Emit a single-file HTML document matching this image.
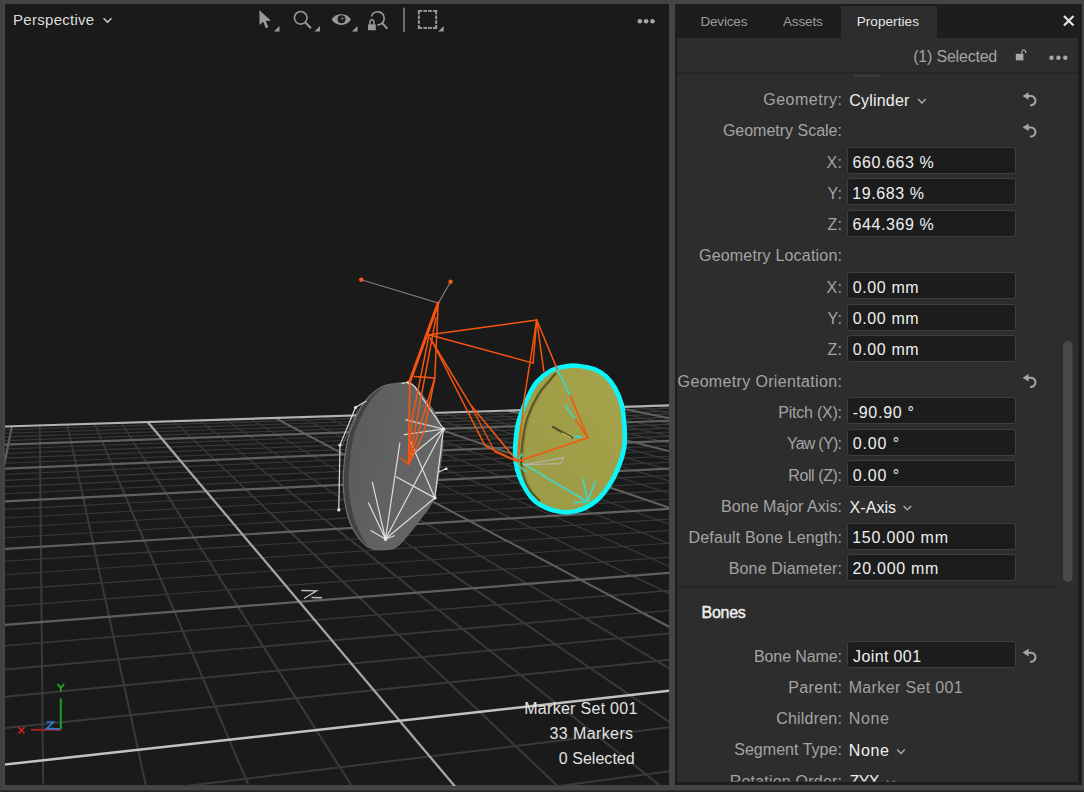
<!DOCTYPE html>
<html><head><meta charset="utf-8">
<style>
html,body{margin:0;padding:0}
body{width:1084px;height:792px;background:#454545;position:relative;overflow:hidden;font-family:"Liberation Sans",sans-serif}
.t{position:absolute;white-space:nowrap;line-height:20px;height:20px}
.abs{position:absolute}
#vp{position:absolute;left:4.8px;top:4px;width:664.2px;height:781.4px;background:#1a1a1a}
#pan{position:absolute;left:675px;top:4px;width:407px;height:781px;background:#1d1d1d}
#body{position:absolute;left:677px;top:38px;width:401px;height:744px;background:#2d2d2d}
#tabact{position:absolute;left:841px;top:6px;width:96px;height:33px;background:#2d2d2d}
.inp{position:absolute;left:846.8px;width:166.8px;height:25px;background:#1c1c1c;border:1px solid #3e3e3e;border-radius:3px}
svg{position:absolute;left:0;top:0}
.mn{stroke:#393939;stroke-width:2}
.mj{stroke:#606060;stroke-width:2.4}
.ax{stroke:#a6a6a6;stroke-width:2.3}
.ax0{stroke:#c2c2c2;stroke-width:2.5}
.ed{stroke:#b2b2b2;stroke-width:2.2}
</style></head><body>
<div class="abs" style="left:0;top:0;width:3px;height:792px;background:#414141"></div>
<div class="abs" style="left:0;top:790px;width:1084px;height:2px;background:linear-gradient(#353535,#232323)"></div>
<div id="vp"></div>
<div id="pan"></div>
<div id="tabact"></div>
<div id="body"></div>
<svg width="1084" height="792" viewBox="0 0 1084 792">
<defs><clipPath id="vpc"><rect x="5" y="4" width="664" height="782"/></clipPath><clipPath id="panc"><rect x="677" y="38" width="401" height="743.6"/></clipPath></defs>
<g clip-path="url(#vpc)" stroke-linecap="butt">
<g class="mn"><line x1="-20.7" y1="437.7" x2="-19.2" y2="434.0" stroke-width="1.65"/>
<line x1="-19.2" y1="434.0" x2="-17.8" y2="430.5" stroke-width="1.61"/>
<line x1="-17.8" y1="430.5" x2="-16.4" y2="427.2" stroke-width="1.57"/>
<line x1="43.8" y1="854.8" x2="43.3" y2="803.3" stroke-width="2.10"/>
<line x1="43.3" y1="803.3" x2="42.9" y2="760.4" stroke-width="2.10"/>
<line x1="42.9" y1="760.4" x2="42.5" y2="724.1" stroke-width="2.10"/>
<line x1="42.5" y1="724.1" x2="42.3" y2="693.1" stroke-width="2.10"/>
<line x1="42.3" y1="693.1" x2="42.0" y2="666.2" stroke-width="2.10"/>
<line x1="42.0" y1="666.2" x2="41.8" y2="642.7" stroke-width="2.10"/>
<line x1="41.8" y1="642.7" x2="41.6" y2="622.0" stroke-width="2.10"/>
<line x1="41.6" y1="622.0" x2="41.4" y2="603.6" stroke-width="2.10"/>
<line x1="41.4" y1="603.6" x2="41.3" y2="587.2" stroke-width="2.10"/>
<line x1="41.3" y1="587.2" x2="41.1" y2="572.4" stroke-width="2.10"/>
<line x1="41.1" y1="572.4" x2="41.0" y2="559.0" stroke-width="2.10"/>
<line x1="41.0" y1="559.0" x2="40.9" y2="546.8" stroke-width="2.10"/>
<line x1="40.9" y1="546.8" x2="40.8" y2="535.7" stroke-width="2.10"/>
<line x1="40.8" y1="535.7" x2="40.7" y2="525.5" stroke-width="2.10"/>
<line x1="40.7" y1="525.5" x2="40.6" y2="516.2" stroke-width="2.10"/>
<line x1="40.6" y1="516.2" x2="40.5" y2="507.5" stroke-width="2.10"/>
<line x1="40.5" y1="507.5" x2="40.4" y2="499.5" stroke-width="2.10"/>
<line x1="40.4" y1="499.5" x2="40.4" y2="492.1" stroke-width="2.10"/>
<line x1="40.4" y1="492.1" x2="40.3" y2="485.2" stroke-width="2.10"/>
<line x1="40.3" y1="485.2" x2="40.2" y2="478.8" stroke-width="2.10"/>
<line x1="40.2" y1="478.8" x2="40.2" y2="472.7" stroke-width="2.10"/>
<line x1="40.2" y1="472.7" x2="40.1" y2="467.1" stroke-width="2.10"/>
<line x1="40.1" y1="467.1" x2="40.1" y2="461.8" stroke-width="2.10"/>
<line x1="40.1" y1="461.8" x2="40.0" y2="456.8" stroke-width="2.07"/>
<line x1="40.0" y1="456.8" x2="40.0" y2="452.1" stroke-width="2.01"/>
<line x1="40.0" y1="452.1" x2="40.0" y2="447.6" stroke-width="1.95"/>
<line x1="40.0" y1="447.6" x2="39.9" y2="443.4" stroke-width="1.90"/>
<line x1="39.9" y1="443.4" x2="39.9" y2="439.4" stroke-width="1.85"/>
<line x1="39.9" y1="439.4" x2="39.8" y2="435.7" stroke-width="1.80"/>
<line x1="39.8" y1="435.7" x2="39.8" y2="432.1" stroke-width="1.76"/>
<line x1="39.8" y1="432.1" x2="39.8" y2="428.7" stroke-width="1.71"/>
<line x1="39.8" y1="428.7" x2="39.7" y2="425.4" stroke-width="1.67"/>
<line x1="157.7" y1="839.6" x2="147.0" y2="790.7" stroke-width="2.10"/>
<line x1="147.0" y1="790.7" x2="138.1" y2="749.8" stroke-width="2.10"/>
<line x1="138.1" y1="749.8" x2="130.6" y2="715.1" stroke-width="2.10"/>
<line x1="130.6" y1="715.1" x2="124.1" y2="685.3" stroke-width="2.10"/>
<line x1="124.1" y1="685.3" x2="118.4" y2="659.4" stroke-width="2.10"/>
<line x1="118.4" y1="659.4" x2="113.5" y2="636.8" stroke-width="2.10"/>
<line x1="113.5" y1="636.8" x2="109.1" y2="616.7" stroke-width="2.10"/>
<line x1="109.1" y1="616.7" x2="105.2" y2="598.9" stroke-width="2.10"/>
<line x1="105.2" y1="598.9" x2="101.8" y2="582.9" stroke-width="2.10"/>
<line x1="101.8" y1="582.9" x2="98.6" y2="568.5" stroke-width="2.10"/>
<line x1="98.6" y1="568.5" x2="95.8" y2="555.5" stroke-width="2.10"/>
<line x1="95.8" y1="555.5" x2="93.2" y2="543.6" stroke-width="2.10"/>
<line x1="93.2" y1="543.6" x2="90.8" y2="532.8" stroke-width="2.10"/>
<line x1="90.8" y1="532.8" x2="88.7" y2="522.9" stroke-width="2.10"/>
<line x1="88.7" y1="522.9" x2="86.7" y2="513.7" stroke-width="2.10"/>
<line x1="86.7" y1="513.7" x2="84.8" y2="505.3" stroke-width="2.10"/>
<line x1="84.8" y1="505.3" x2="83.1" y2="497.4" stroke-width="2.10"/>
<line x1="83.1" y1="497.4" x2="81.6" y2="490.2" stroke-width="2.10"/>
<line x1="81.6" y1="490.2" x2="80.1" y2="483.4" stroke-width="2.10"/>
<line x1="80.1" y1="483.4" x2="78.7" y2="477.1" stroke-width="2.10"/>
<line x1="78.7" y1="477.1" x2="77.4" y2="471.1" stroke-width="2.10"/>
<line x1="77.4" y1="471.1" x2="76.2" y2="465.6" stroke-width="2.10"/>
<line x1="76.2" y1="465.6" x2="75.1" y2="460.4" stroke-width="2.07"/>
<line x1="75.1" y1="460.4" x2="74.0" y2="455.5" stroke-width="2.01"/>
<line x1="74.0" y1="455.5" x2="73.0" y2="450.8" stroke-width="1.95"/>
<line x1="73.0" y1="450.8" x2="72.0" y2="446.4" stroke-width="1.89"/>
<line x1="72.0" y1="446.4" x2="71.1" y2="442.3" stroke-width="1.84"/>
<line x1="71.1" y1="442.3" x2="70.3" y2="438.4" stroke-width="1.79"/>
<line x1="70.3" y1="438.4" x2="69.5" y2="434.7" stroke-width="1.75"/>
<line x1="69.5" y1="434.7" x2="68.7" y2="431.1" stroke-width="1.70"/>
<line x1="68.7" y1="431.1" x2="68.0" y2="427.8" stroke-width="1.66"/>
<line x1="68.0" y1="427.8" x2="67.3" y2="424.5" stroke-width="1.62"/>
<line x1="265.6" y1="825.2" x2="245.8" y2="778.7" stroke-width="2.10"/>
<line x1="245.8" y1="778.7" x2="229.1" y2="739.7" stroke-width="2.10"/>
<line x1="229.1" y1="739.7" x2="215.0" y2="706.4" stroke-width="2.10"/>
<line x1="215.0" y1="706.4" x2="202.8" y2="677.8" stroke-width="2.10"/>
<line x1="202.8" y1="677.8" x2="192.1" y2="652.9" stroke-width="2.10"/>
<line x1="192.1" y1="652.9" x2="182.8" y2="631.0" stroke-width="2.10"/>
<line x1="182.8" y1="631.0" x2="174.5" y2="611.6" stroke-width="2.10"/>
<line x1="174.5" y1="611.6" x2="167.2" y2="594.3" stroke-width="2.10"/>
<line x1="167.2" y1="594.3" x2="160.6" y2="578.8" stroke-width="2.10"/>
<line x1="160.6" y1="578.8" x2="154.6" y2="564.8" stroke-width="2.10"/>
<line x1="154.6" y1="564.8" x2="149.2" y2="552.1" stroke-width="2.10"/>
<line x1="149.2" y1="552.1" x2="144.2" y2="540.5" stroke-width="2.10"/>
<line x1="144.2" y1="540.5" x2="139.7" y2="530.0" stroke-width="2.10"/>
<line x1="139.7" y1="530.0" x2="135.6" y2="520.3" stroke-width="2.10"/>
<line x1="135.6" y1="520.3" x2="131.8" y2="511.3" stroke-width="2.10"/>
<line x1="131.8" y1="511.3" x2="128.3" y2="503.0" stroke-width="2.10"/>
<line x1="128.3" y1="503.0" x2="125.0" y2="495.4" stroke-width="2.10"/>
<line x1="125.0" y1="495.4" x2="122.0" y2="488.2" stroke-width="2.10"/>
<line x1="122.0" y1="488.2" x2="119.1" y2="481.6" stroke-width="2.10"/>
<line x1="119.1" y1="481.6" x2="116.5" y2="475.4" stroke-width="2.10"/>
<line x1="116.5" y1="475.4" x2="114.0" y2="469.6" stroke-width="2.05"/>
<line x1="114.0" y1="469.6" x2="111.7" y2="464.1" stroke-width="1.99"/>
<line x1="111.7" y1="464.1" x2="109.5" y2="459.0" stroke-width="1.93"/>
<line x1="109.5" y1="459.0" x2="107.4" y2="454.1" stroke-width="1.87"/>
<line x1="107.4" y1="454.1" x2="105.5" y2="449.6" stroke-width="1.82"/>
<line x1="105.5" y1="449.6" x2="103.6" y2="445.3" stroke-width="1.77"/>
<line x1="103.6" y1="445.3" x2="101.9" y2="441.2" stroke-width="1.72"/>
<line x1="101.9" y1="441.2" x2="100.3" y2="437.3" stroke-width="1.68"/>
<line x1="100.3" y1="437.3" x2="98.7" y2="433.7" stroke-width="1.63"/>
<line x1="98.7" y1="433.7" x2="97.2" y2="430.2" stroke-width="1.59"/>
<line x1="97.2" y1="430.2" x2="95.8" y2="426.8" stroke-width="1.55"/>
<line x1="95.8" y1="426.8" x2="94.4" y2="423.7" stroke-width="1.52"/>
<line x1="401.8" y1="864.9" x2="368.0" y2="811.5" stroke-width="2.10"/>
<line x1="368.0" y1="811.5" x2="339.9" y2="767.3" stroke-width="2.10"/>
<line x1="339.9" y1="767.3" x2="316.2" y2="730.0" stroke-width="2.10"/>
<line x1="316.2" y1="730.0" x2="296.0" y2="698.1" stroke-width="2.10"/>
<line x1="296.0" y1="698.1" x2="278.5" y2="670.6" stroke-width="2.10"/>
<line x1="278.5" y1="670.6" x2="263.3" y2="646.6" stroke-width="2.10"/>
<line x1="263.3" y1="646.6" x2="249.8" y2="625.4" stroke-width="2.10"/>
<line x1="249.8" y1="625.4" x2="237.9" y2="606.6" stroke-width="2.10"/>
<line x1="237.9" y1="606.6" x2="227.3" y2="589.9" stroke-width="2.10"/>
<line x1="227.3" y1="589.9" x2="217.7" y2="574.8" stroke-width="2.10"/>
<line x1="217.7" y1="574.8" x2="209.1" y2="561.2" stroke-width="2.10"/>
<line x1="209.1" y1="561.2" x2="201.2" y2="548.8" stroke-width="2.10"/>
<line x1="201.2" y1="548.8" x2="194.1" y2="537.5" stroke-width="2.10"/>
<line x1="194.1" y1="537.5" x2="187.5" y2="527.2" stroke-width="2.10"/>
<line x1="187.5" y1="527.2" x2="181.5" y2="517.7" stroke-width="2.10"/>
<line x1="181.5" y1="517.7" x2="175.9" y2="509.0" stroke-width="2.10"/>
<line x1="175.9" y1="509.0" x2="170.8" y2="500.9" stroke-width="2.10"/>
<line x1="170.8" y1="500.9" x2="166.0" y2="493.3" stroke-width="2.10"/>
<line x1="166.0" y1="493.3" x2="161.6" y2="486.4" stroke-width="2.06"/>
<line x1="161.6" y1="486.4" x2="157.4" y2="479.8" stroke-width="1.99"/>
<line x1="157.4" y1="479.8" x2="153.6" y2="473.7" stroke-width="1.93"/>
<line x1="153.6" y1="473.7" x2="149.9" y2="468.0" stroke-width="1.87"/>
<line x1="149.9" y1="468.0" x2="146.5" y2="462.7" stroke-width="1.81"/>
<line x1="146.5" y1="462.7" x2="143.3" y2="457.6" stroke-width="1.76"/>
<line x1="143.3" y1="457.6" x2="140.3" y2="452.9" stroke-width="1.71"/>
<line x1="140.3" y1="452.9" x2="137.5" y2="448.4" stroke-width="1.66"/>
<line x1="137.5" y1="448.4" x2="134.8" y2="444.1" stroke-width="1.61"/>
<line x1="134.8" y1="444.1" x2="132.2" y2="440.1" stroke-width="1.57"/>
<line x1="132.2" y1="440.1" x2="129.8" y2="436.3" stroke-width="1.53"/>
<line x1="129.8" y1="436.3" x2="127.5" y2="432.7" stroke-width="1.49"/>
<line x1="127.5" y1="432.7" x2="125.3" y2="429.2" stroke-width="1.45"/>
<line x1="125.3" y1="429.2" x2="123.2" y2="426.0" stroke-width="1.42"/>
<line x1="123.2" y1="426.0" x2="121.3" y2="422.8" stroke-width="1.38"/>
<line x1="608.3" y1="834.2" x2="557.8" y2="786.2" stroke-width="2.10"/>
<line x1="557.8" y1="786.2" x2="515.5" y2="746.0" stroke-width="2.10"/>
<line x1="515.5" y1="746.0" x2="479.6" y2="711.8" stroke-width="2.10"/>
<line x1="479.6" y1="711.8" x2="448.7" y2="682.5" stroke-width="2.10"/>
<line x1="448.7" y1="682.5" x2="421.9" y2="657.0" stroke-width="2.10"/>
<line x1="421.9" y1="657.0" x2="398.3" y2="634.6" stroke-width="2.10"/>
<line x1="398.3" y1="634.6" x2="377.5" y2="614.8" stroke-width="2.10"/>
<line x1="377.5" y1="614.8" x2="359.0" y2="597.1" stroke-width="2.10"/>
<line x1="359.0" y1="597.1" x2="342.3" y2="581.3" stroke-width="2.10"/>
<line x1="342.3" y1="581.3" x2="327.4" y2="567.1" stroke-width="2.10"/>
<line x1="327.4" y1="567.1" x2="313.8" y2="554.2" stroke-width="2.10"/>
<line x1="313.8" y1="554.2" x2="301.4" y2="542.5" stroke-width="2.10"/>
<line x1="301.4" y1="542.5" x2="290.1" y2="531.7" stroke-width="2.08"/>
<line x1="290.1" y1="531.7" x2="279.8" y2="521.9" stroke-width="2.00"/>
<line x1="279.8" y1="521.9" x2="270.2" y2="512.8" stroke-width="1.92"/>
<line x1="270.2" y1="512.8" x2="261.4" y2="504.4" stroke-width="1.84"/>
<line x1="261.4" y1="504.4" x2="253.2" y2="496.6" stroke-width="1.78"/>
<line x1="253.2" y1="496.6" x2="245.7" y2="489.4" stroke-width="1.71"/>
<line x1="245.7" y1="489.4" x2="238.6" y2="482.7" stroke-width="1.65"/>
<line x1="238.6" y1="482.7" x2="232.0" y2="476.4" stroke-width="1.60"/>
<line x1="232.0" y1="476.4" x2="225.8" y2="470.5" stroke-width="1.55"/>
<line x1="225.8" y1="470.5" x2="220.0" y2="465.0" stroke-width="1.50"/>
<line x1="220.0" y1="465.0" x2="214.5" y2="459.8" stroke-width="1.45"/>
<line x1="214.5" y1="459.8" x2="209.4" y2="454.9" stroke-width="1.41"/>
<line x1="209.4" y1="454.9" x2="204.6" y2="450.3" stroke-width="1.37"/>
<line x1="204.6" y1="450.3" x2="200.0" y2="446.0" stroke-width="1.33"/>
<line x1="200.0" y1="446.0" x2="195.6" y2="441.9" stroke-width="1.30"/>
<line x1="195.6" y1="441.9" x2="191.5" y2="438.0" stroke-width="1.26"/>
<line x1="191.5" y1="438.0" x2="187.6" y2="434.3" stroke-width="1.23"/>
<line x1="187.6" y1="434.3" x2="183.9" y2="430.7" stroke-width="1.20"/>
<line x1="183.9" y1="430.7" x2="180.4" y2="427.4" stroke-width="1.20"/>
<line x1="180.4" y1="427.4" x2="177.1" y2="424.2" stroke-width="1.20"/>
<line x1="177.1" y1="424.2" x2="173.9" y2="421.2" stroke-width="1.20"/>
<line x1="703.5" y1="820.1" x2="645.9" y2="774.4" stroke-width="2.10"/>
<line x1="645.9" y1="774.4" x2="597.5" y2="736.0" stroke-width="2.10"/>
<line x1="597.5" y1="736.0" x2="556.3" y2="703.3" stroke-width="2.10"/>
<line x1="556.3" y1="703.3" x2="520.7" y2="675.1" stroke-width="2.10"/>
<line x1="520.7" y1="675.1" x2="489.7" y2="650.5" stroke-width="2.10"/>
<line x1="489.7" y1="650.5" x2="462.5" y2="628.9" stroke-width="2.10"/>
<line x1="462.5" y1="628.9" x2="438.3" y2="609.7" stroke-width="2.10"/>
<line x1="438.3" y1="609.7" x2="416.8" y2="592.6" stroke-width="2.10"/>
<line x1="416.8" y1="592.6" x2="397.5" y2="577.3" stroke-width="2.10"/>
<line x1="397.5" y1="577.3" x2="380.0" y2="563.4" stroke-width="2.10"/>
<line x1="380.0" y1="563.4" x2="364.2" y2="550.8" stroke-width="2.03"/>
<line x1="364.2" y1="550.8" x2="349.7" y2="539.4" stroke-width="1.94"/>
<line x1="349.7" y1="539.4" x2="336.5" y2="528.9" stroke-width="1.86"/>
<line x1="336.5" y1="528.9" x2="324.4" y2="519.3" stroke-width="1.78"/>
<line x1="324.4" y1="519.3" x2="313.2" y2="510.4" stroke-width="1.71"/>
<line x1="313.2" y1="510.4" x2="302.8" y2="502.2" stroke-width="1.65"/>
<line x1="302.8" y1="502.2" x2="293.2" y2="494.6" stroke-width="1.59"/>
<line x1="293.2" y1="494.6" x2="284.3" y2="487.5" stroke-width="1.53"/>
<line x1="284.3" y1="487.5" x2="276.0" y2="480.9" stroke-width="1.48"/>
<line x1="276.0" y1="480.9" x2="268.2" y2="474.7" stroke-width="1.43"/>
<line x1="268.2" y1="474.7" x2="261.0" y2="469.0" stroke-width="1.38"/>
<line x1="261.0" y1="469.0" x2="254.1" y2="463.5" stroke-width="1.34"/>
<line x1="254.1" y1="463.5" x2="247.7" y2="458.4" stroke-width="1.30"/>
<line x1="247.7" y1="458.4" x2="241.6" y2="453.6" stroke-width="1.26"/>
<line x1="241.6" y1="453.6" x2="235.9" y2="449.1" stroke-width="1.23"/>
<line x1="235.9" y1="449.1" x2="230.5" y2="444.8" stroke-width="1.20"/>
<line x1="230.5" y1="444.8" x2="225.4" y2="440.8" stroke-width="1.20"/>
<line x1="225.4" y1="440.8" x2="220.6" y2="436.9" stroke-width="1.20"/>
<line x1="220.6" y1="436.9" x2="216.0" y2="433.3" stroke-width="1.20"/>
<line x1="216.0" y1="433.3" x2="211.6" y2="429.8" stroke-width="1.20"/>
<line x1="211.6" y1="429.8" x2="207.4" y2="426.5" stroke-width="1.20"/>
<line x1="207.4" y1="426.5" x2="203.5" y2="423.3" stroke-width="1.20"/>
<line x1="203.5" y1="423.3" x2="199.7" y2="420.3" stroke-width="1.20"/>
<line x1="730.0" y1="763.2" x2="676.1" y2="726.5" stroke-width="2.10"/>
<line x1="676.1" y1="726.5" x2="630.0" y2="695.1" stroke-width="2.10"/>
<line x1="630.0" y1="695.1" x2="590.1" y2="668.0" stroke-width="2.10"/>
<line x1="590.1" y1="668.0" x2="555.3" y2="644.3" stroke-width="2.10"/>
<line x1="555.3" y1="644.3" x2="524.6" y2="623.4" stroke-width="2.10"/>
<line x1="524.6" y1="623.4" x2="497.3" y2="604.8" stroke-width="2.10"/>
<line x1="497.3" y1="604.8" x2="472.9" y2="588.2" stroke-width="2.10"/>
<line x1="472.9" y1="588.2" x2="451.0" y2="573.3" stroke-width="2.00"/>
<line x1="451.0" y1="573.3" x2="431.2" y2="559.8" stroke-width="1.90"/>
<line x1="431.2" y1="559.8" x2="413.2" y2="547.6" stroke-width="1.82"/>
<line x1="413.2" y1="547.6" x2="396.8" y2="536.4" stroke-width="1.74"/>
<line x1="396.8" y1="536.4" x2="381.8" y2="526.2" stroke-width="1.66"/>
<line x1="381.8" y1="526.2" x2="368.0" y2="516.8" stroke-width="1.59"/>
<line x1="368.0" y1="516.8" x2="355.2" y2="508.1" stroke-width="1.53"/>
<line x1="355.2" y1="508.1" x2="343.4" y2="500.0" stroke-width="1.47"/>
<line x1="343.4" y1="500.0" x2="332.5" y2="492.6" stroke-width="1.42"/>
<line x1="332.5" y1="492.6" x2="322.3" y2="485.6" stroke-width="1.37"/>
<line x1="322.3" y1="485.6" x2="312.8" y2="479.2" stroke-width="1.32"/>
<line x1="312.8" y1="479.2" x2="303.9" y2="473.1" stroke-width="1.28"/>
<line x1="303.9" y1="473.1" x2="295.5" y2="467.4" stroke-width="1.24"/>
<line x1="295.5" y1="467.4" x2="287.7" y2="462.1" stroke-width="1.20"/>
<line x1="287.7" y1="462.1" x2="280.3" y2="457.1" stroke-width="1.20"/>
<line x1="280.3" y1="457.1" x2="273.4" y2="452.4" stroke-width="1.20"/>
<line x1="273.4" y1="452.4" x2="266.8" y2="447.9" stroke-width="1.20"/>
<line x1="266.8" y1="447.9" x2="260.6" y2="443.7" stroke-width="1.20"/>
<line x1="260.6" y1="443.7" x2="254.8" y2="439.7" stroke-width="1.20"/>
<line x1="254.8" y1="439.7" x2="249.2" y2="435.9" stroke-width="1.20"/>
<line x1="249.2" y1="435.9" x2="243.9" y2="432.3" stroke-width="1.20"/>
<line x1="243.9" y1="432.3" x2="238.9" y2="428.9" stroke-width="1.20"/>
<line x1="238.9" y1="428.9" x2="234.1" y2="425.6" stroke-width="1.20"/>
<line x1="234.1" y1="425.6" x2="229.5" y2="422.5" stroke-width="1.20"/>
<line x1="229.5" y1="422.5" x2="225.2" y2="419.5" stroke-width="1.20"/>
<line x1="700.8" y1="687.3" x2="656.9" y2="661.1" stroke-width="2.10"/>
<line x1="656.9" y1="661.1" x2="618.5" y2="638.2" stroke-width="2.10"/>
<line x1="618.5" y1="638.2" x2="584.6" y2="618.0" stroke-width="2.10"/>
<line x1="584.6" y1="618.0" x2="554.5" y2="600.0" stroke-width="2.00"/>
<line x1="554.5" y1="600.0" x2="527.5" y2="583.9" stroke-width="1.89"/>
<line x1="527.5" y1="583.9" x2="503.2" y2="569.4" stroke-width="1.80"/>
<line x1="503.2" y1="569.4" x2="481.1" y2="556.3" stroke-width="1.71"/>
<line x1="481.1" y1="556.3" x2="461.1" y2="544.4" stroke-width="1.63"/>
<line x1="461.1" y1="544.4" x2="442.8" y2="533.5" stroke-width="1.56"/>
<line x1="442.8" y1="533.5" x2="426.1" y2="523.5" stroke-width="1.49"/>
<line x1="426.1" y1="523.5" x2="410.6" y2="514.3" stroke-width="1.43"/>
<line x1="410.6" y1="514.3" x2="396.4" y2="505.8" stroke-width="1.38"/>
<line x1="396.4" y1="505.8" x2="383.2" y2="497.9" stroke-width="1.33"/>
<line x1="383.2" y1="497.9" x2="370.9" y2="490.6" stroke-width="1.28"/>
<line x1="370.9" y1="490.6" x2="359.5" y2="483.8" stroke-width="1.24"/>
<line x1="359.5" y1="483.8" x2="348.8" y2="477.4" stroke-width="1.20"/>
<line x1="348.8" y1="477.4" x2="338.8" y2="471.5" stroke-width="1.20"/>
<line x1="338.8" y1="471.5" x2="329.5" y2="465.9" stroke-width="1.20"/>
<line x1="329.5" y1="465.9" x2="320.7" y2="460.7" stroke-width="1.20"/>
<line x1="320.7" y1="460.7" x2="312.4" y2="455.8" stroke-width="1.20"/>
<line x1="312.4" y1="455.8" x2="304.6" y2="451.1" stroke-width="1.20"/>
<line x1="304.6" y1="451.1" x2="297.3" y2="446.7" stroke-width="1.20"/>
<line x1="297.3" y1="446.7" x2="290.3" y2="442.6" stroke-width="1.20"/>
<line x1="290.3" y1="442.6" x2="283.7" y2="438.6" stroke-width="1.20"/>
<line x1="283.7" y1="438.6" x2="277.4" y2="434.9" stroke-width="1.20"/>
<line x1="277.4" y1="434.9" x2="271.4" y2="431.3" stroke-width="1.20"/>
<line x1="271.4" y1="431.3" x2="265.8" y2="427.9" stroke-width="1.20"/>
<line x1="265.8" y1="427.9" x2="260.4" y2="424.7" stroke-width="1.20"/>
<line x1="260.4" y1="424.7" x2="255.2" y2="421.7" stroke-width="1.20"/>
<line x1="255.2" y1="421.7" x2="250.3" y2="418.7" stroke-width="1.20"/>
<line x1="738.8" y1="626.8" x2="699.2" y2="607.8" stroke-width="1.72"/>
<line x1="699.2" y1="607.8" x2="663.8" y2="590.9" stroke-width="1.63"/>
<line x1="663.8" y1="590.9" x2="632.0" y2="575.8" stroke-width="1.55"/>
<line x1="632.0" y1="575.8" x2="603.2" y2="562.0" stroke-width="1.47"/>
<line x1="603.2" y1="562.0" x2="577.2" y2="549.6" stroke-width="1.40"/>
<line x1="577.2" y1="549.6" x2="553.4" y2="538.2" stroke-width="1.34"/>
<line x1="553.4" y1="538.2" x2="531.6" y2="527.9" stroke-width="1.28"/>
<line x1="531.6" y1="527.9" x2="511.6" y2="518.3" stroke-width="1.23"/>
<line x1="511.6" y1="518.3" x2="493.2" y2="509.5" stroke-width="1.20"/>
<line x1="493.2" y1="509.5" x2="476.1" y2="501.4" stroke-width="1.20"/>
<line x1="476.1" y1="501.4" x2="460.3" y2="493.8" stroke-width="1.20"/>
<line x1="460.3" y1="493.8" x2="445.6" y2="486.8" stroke-width="1.20"/>
<line x1="445.6" y1="486.8" x2="431.9" y2="480.2" stroke-width="1.20"/>
<line x1="431.9" y1="480.2" x2="419.0" y2="474.1" stroke-width="1.20"/>
<line x1="419.0" y1="474.1" x2="407.0" y2="468.4" stroke-width="1.20"/>
<line x1="407.0" y1="468.4" x2="395.7" y2="463.0" stroke-width="1.20"/>
<line x1="395.7" y1="463.0" x2="385.1" y2="457.9" stroke-width="1.20"/>
<line x1="385.1" y1="457.9" x2="375.1" y2="453.1" stroke-width="1.20"/>
<line x1="375.1" y1="453.1" x2="365.7" y2="448.6" stroke-width="1.20"/>
<line x1="365.7" y1="448.6" x2="356.7" y2="444.4" stroke-width="1.20"/>
<line x1="356.7" y1="444.4" x2="348.3" y2="440.3" stroke-width="1.20"/>
<line x1="348.3" y1="440.3" x2="340.3" y2="436.5" stroke-width="1.20"/>
<line x1="340.3" y1="436.5" x2="332.7" y2="432.9" stroke-width="1.20"/>
<line x1="332.7" y1="432.9" x2="325.4" y2="429.4" stroke-width="1.20"/>
<line x1="325.4" y1="429.4" x2="318.5" y2="426.1" stroke-width="1.20"/>
<line x1="318.5" y1="426.1" x2="312.0" y2="423.0" stroke-width="1.20"/>
<line x1="312.0" y1="423.0" x2="305.7" y2="420.0" stroke-width="1.20"/>
<line x1="305.7" y1="420.0" x2="299.7" y2="417.2" stroke-width="1.20"/>
<line x1="716.0" y1="586.6" x2="682.0" y2="571.8" stroke-width="1.41"/>
<line x1="682.0" y1="571.8" x2="651.3" y2="558.5" stroke-width="1.34"/>
<line x1="651.3" y1="558.5" x2="623.4" y2="546.4" stroke-width="1.28"/>
<line x1="623.4" y1="546.4" x2="597.9" y2="535.3" stroke-width="1.22"/>
<line x1="597.9" y1="535.3" x2="574.5" y2="525.1" stroke-width="1.20"/>
<line x1="574.5" y1="525.1" x2="553.0" y2="515.8" stroke-width="1.20"/>
<line x1="553.0" y1="515.8" x2="533.1" y2="507.2" stroke-width="1.20"/>
<line x1="533.1" y1="507.2" x2="514.8" y2="499.2" stroke-width="1.20"/>
<line x1="514.8" y1="499.2" x2="497.7" y2="491.8" stroke-width="1.20"/>
<line x1="497.7" y1="491.8" x2="481.9" y2="484.9" stroke-width="1.20"/>
<line x1="481.9" y1="484.9" x2="467.0" y2="478.5" stroke-width="1.20"/>
<line x1="467.0" y1="478.5" x2="453.2" y2="472.5" stroke-width="1.20"/>
<line x1="453.2" y1="472.5" x2="440.2" y2="466.8" stroke-width="1.20"/>
<line x1="440.2" y1="466.8" x2="428.0" y2="461.6" stroke-width="1.20"/>
<line x1="428.0" y1="461.6" x2="416.5" y2="456.6" stroke-width="1.20"/>
<line x1="416.5" y1="456.6" x2="405.7" y2="451.9" stroke-width="1.20"/>
<line x1="405.7" y1="451.9" x2="395.5" y2="447.4" stroke-width="1.20"/>
<line x1="395.5" y1="447.4" x2="385.8" y2="443.2" stroke-width="1.20"/>
<line x1="385.8" y1="443.2" x2="376.7" y2="439.3" stroke-width="1.20"/>
<line x1="376.7" y1="439.3" x2="368.0" y2="435.5" stroke-width="1.20"/>
<line x1="368.0" y1="435.5" x2="359.7" y2="431.9" stroke-width="1.20"/>
<line x1="359.7" y1="431.9" x2="351.9" y2="428.5" stroke-width="1.20"/>
<line x1="351.9" y1="428.5" x2="344.4" y2="425.3" stroke-width="1.20"/>
<line x1="344.4" y1="425.3" x2="337.3" y2="422.2" stroke-width="1.20"/>
<line x1="337.3" y1="422.2" x2="330.5" y2="419.2" stroke-width="1.20"/>
<line x1="330.5" y1="419.2" x2="324.0" y2="416.4" stroke-width="1.20"/>
<line x1="730.8" y1="568.0" x2="698.1" y2="555.0" stroke-width="1.23"/>
<line x1="698.1" y1="555.0" x2="668.4" y2="543.2" stroke-width="1.20"/>
<line x1="668.4" y1="543.2" x2="641.3" y2="532.4" stroke-width="1.20"/>
<line x1="641.3" y1="532.4" x2="616.4" y2="522.5" stroke-width="1.20"/>
<line x1="616.4" y1="522.5" x2="593.4" y2="513.4" stroke-width="1.20"/>
<line x1="593.4" y1="513.4" x2="572.3" y2="504.9" stroke-width="1.20"/>
<line x1="572.3" y1="504.9" x2="552.6" y2="497.1" stroke-width="1.20"/>
<line x1="552.6" y1="497.1" x2="534.4" y2="489.9" stroke-width="1.20"/>
<line x1="534.4" y1="489.9" x2="517.4" y2="483.1" stroke-width="1.20"/>
<line x1="517.4" y1="483.1" x2="501.6" y2="476.8" stroke-width="1.20"/>
<line x1="501.6" y1="476.8" x2="486.7" y2="470.9" stroke-width="1.20"/>
<line x1="486.7" y1="470.9" x2="472.8" y2="465.3" stroke-width="1.20"/>
<line x1="472.8" y1="465.3" x2="459.7" y2="460.1" stroke-width="1.20"/>
<line x1="459.7" y1="460.1" x2="447.4" y2="455.2" stroke-width="1.20"/>
<line x1="447.4" y1="455.2" x2="435.8" y2="450.6" stroke-width="1.20"/>
<line x1="435.8" y1="450.6" x2="424.8" y2="446.2" stroke-width="1.20"/>
<line x1="424.8" y1="446.2" x2="414.5" y2="442.1" stroke-width="1.20"/>
<line x1="414.5" y1="442.1" x2="404.6" y2="438.2" stroke-width="1.20"/>
<line x1="404.6" y1="438.2" x2="395.3" y2="434.5" stroke-width="1.20"/>
<line x1="395.3" y1="434.5" x2="386.4" y2="430.9" stroke-width="1.20"/>
<line x1="386.4" y1="430.9" x2="378.0" y2="427.6" stroke-width="1.20"/>
<line x1="378.0" y1="427.6" x2="369.9" y2="424.4" stroke-width="1.20"/>
<line x1="369.9" y1="424.4" x2="362.3" y2="421.3" stroke-width="1.20"/>
<line x1="362.3" y1="421.3" x2="354.9" y2="418.4" stroke-width="1.20"/>
<line x1="354.9" y1="418.4" x2="347.9" y2="415.6" stroke-width="1.20"/>
<line x1="712.4" y1="540.1" x2="683.7" y2="529.6" stroke-width="1.20"/>
<line x1="683.7" y1="529.6" x2="657.3" y2="519.9" stroke-width="1.20"/>
<line x1="657.3" y1="519.9" x2="633.0" y2="511.0" stroke-width="1.20"/>
<line x1="633.0" y1="511.0" x2="610.6" y2="502.7" stroke-width="1.20"/>
<line x1="610.6" y1="502.7" x2="589.8" y2="495.1" stroke-width="1.20"/>
<line x1="589.8" y1="495.1" x2="570.4" y2="487.9" stroke-width="1.20"/>
<line x1="570.4" y1="487.9" x2="552.4" y2="481.3" stroke-width="1.20"/>
<line x1="552.4" y1="481.3" x2="535.5" y2="475.1" stroke-width="1.20"/>
<line x1="535.5" y1="475.1" x2="519.7" y2="469.3" stroke-width="1.20"/>
<line x1="519.7" y1="469.3" x2="504.9" y2="463.9" stroke-width="1.20"/>
<line x1="504.9" y1="463.9" x2="491.0" y2="458.8" stroke-width="1.20"/>
<line x1="491.0" y1="458.8" x2="477.9" y2="453.9" stroke-width="1.20"/>
<line x1="477.9" y1="453.9" x2="465.5" y2="449.4" stroke-width="1.20"/>
<line x1="465.5" y1="449.4" x2="453.8" y2="445.1" stroke-width="1.20"/>
<line x1="453.8" y1="445.1" x2="442.7" y2="441.0" stroke-width="1.20"/>
<line x1="442.7" y1="441.0" x2="432.2" y2="437.1" stroke-width="1.20"/>
<line x1="432.2" y1="437.1" x2="422.2" y2="433.5" stroke-width="1.20"/>
<line x1="422.2" y1="433.5" x2="412.7" y2="430.0" stroke-width="1.20"/>
<line x1="412.7" y1="430.0" x2="403.7" y2="426.7" stroke-width="1.20"/>
<line x1="403.7" y1="426.7" x2="395.1" y2="423.5" stroke-width="1.20"/>
<line x1="395.1" y1="423.5" x2="386.9" y2="420.5" stroke-width="1.20"/>
<line x1="386.9" y1="420.5" x2="379.1" y2="417.6" stroke-width="1.20"/>
<line x1="379.1" y1="417.6" x2="371.6" y2="414.9" stroke-width="1.20"/>
<line x1="709.7" y1="506.3" x2="684.9" y2="498.4" stroke-width="1.20"/>
<line x1="684.9" y1="498.4" x2="661.8" y2="491.1" stroke-width="1.20"/>
<line x1="661.8" y1="491.1" x2="640.3" y2="484.2" stroke-width="1.20"/>
<line x1="640.3" y1="484.2" x2="620.3" y2="477.8" stroke-width="1.20"/>
<line x1="620.3" y1="477.8" x2="601.6" y2="471.9" stroke-width="1.20"/>
<line x1="601.6" y1="471.9" x2="584.0" y2="466.3" stroke-width="1.20"/>
<line x1="584.0" y1="466.3" x2="567.5" y2="461.0" stroke-width="1.20"/>
<line x1="567.5" y1="461.0" x2="551.9" y2="456.0" stroke-width="1.20"/>
<line x1="551.9" y1="456.0" x2="537.3" y2="451.4" stroke-width="1.20"/>
<line x1="537.3" y1="451.4" x2="523.4" y2="447.0" stroke-width="1.20"/>
<line x1="523.4" y1="447.0" x2="510.3" y2="442.8" stroke-width="1.20"/>
<line x1="510.3" y1="442.8" x2="497.9" y2="438.8" stroke-width="1.20"/>
<line x1="497.9" y1="438.8" x2="486.1" y2="435.1" stroke-width="1.20"/>
<line x1="486.1" y1="435.1" x2="475.0" y2="431.5" stroke-width="1.20"/>
<line x1="475.0" y1="431.5" x2="464.3" y2="428.1" stroke-width="1.20"/>
<line x1="464.3" y1="428.1" x2="454.2" y2="424.9" stroke-width="1.20"/>
<line x1="454.2" y1="424.9" x2="444.5" y2="421.8" stroke-width="1.20"/>
<line x1="444.5" y1="421.8" x2="435.3" y2="418.9" stroke-width="1.20"/>
<line x1="435.3" y1="418.9" x2="426.5" y2="416.1" stroke-width="1.20"/>
<line x1="426.5" y1="416.1" x2="418.1" y2="413.4" stroke-width="1.20"/>
<line x1="720.9" y1="496.3" x2="696.8" y2="489.1" stroke-width="1.20"/>
<line x1="696.8" y1="489.1" x2="674.3" y2="482.4" stroke-width="1.20"/>
<line x1="674.3" y1="482.4" x2="653.3" y2="476.1" stroke-width="1.20"/>
<line x1="653.3" y1="476.1" x2="633.7" y2="470.3" stroke-width="1.20"/>
<line x1="633.7" y1="470.3" x2="615.3" y2="464.8" stroke-width="1.20"/>
<line x1="615.3" y1="464.8" x2="598.0" y2="459.6" stroke-width="1.20"/>
<line x1="598.0" y1="459.6" x2="581.7" y2="454.7" stroke-width="1.20"/>
<line x1="581.7" y1="454.7" x2="566.3" y2="450.1" stroke-width="1.20"/>
<line x1="566.3" y1="450.1" x2="551.7" y2="445.8" stroke-width="1.20"/>
<line x1="551.7" y1="445.8" x2="538.0" y2="441.7" stroke-width="1.20"/>
<line x1="538.0" y1="441.7" x2="524.9" y2="437.8" stroke-width="1.20"/>
<line x1="524.9" y1="437.8" x2="512.6" y2="434.1" stroke-width="1.20"/>
<line x1="512.6" y1="434.1" x2="500.8" y2="430.6" stroke-width="1.20"/>
<line x1="500.8" y1="430.6" x2="489.6" y2="427.2" stroke-width="1.20"/>
<line x1="489.6" y1="427.2" x2="478.9" y2="424.0" stroke-width="1.20"/>
<line x1="478.9" y1="424.0" x2="468.8" y2="421.0" stroke-width="1.20"/>
<line x1="468.8" y1="421.0" x2="459.1" y2="418.1" stroke-width="1.20"/>
<line x1="459.1" y1="418.1" x2="449.8" y2="415.3" stroke-width="1.20"/>
<line x1="449.8" y1="415.3" x2="440.9" y2="412.7" stroke-width="1.20"/>
<line x1="707.7" y1="480.6" x2="685.8" y2="474.5" stroke-width="1.20"/>
<line x1="685.8" y1="474.5" x2="665.3" y2="468.7" stroke-width="1.20"/>
<line x1="665.3" y1="468.7" x2="646.1" y2="463.3" stroke-width="1.20"/>
<line x1="646.1" y1="463.3" x2="628.0" y2="458.2" stroke-width="1.20"/>
<line x1="628.0" y1="458.2" x2="610.9" y2="453.4" stroke-width="1.20"/>
<line x1="610.9" y1="453.4" x2="594.8" y2="448.9" stroke-width="1.20"/>
<line x1="594.8" y1="448.9" x2="579.6" y2="444.6" stroke-width="1.20"/>
<line x1="579.6" y1="444.6" x2="565.2" y2="440.6" stroke-width="1.20"/>
<line x1="565.2" y1="440.6" x2="551.6" y2="436.7" stroke-width="1.20"/>
<line x1="551.6" y1="436.7" x2="538.6" y2="433.1" stroke-width="1.20"/>
<line x1="538.6" y1="433.1" x2="526.3" y2="429.6" stroke-width="1.20"/>
<line x1="526.3" y1="429.6" x2="514.6" y2="426.3" stroke-width="1.20"/>
<line x1="514.6" y1="426.3" x2="503.4" y2="423.2" stroke-width="1.20"/>
<line x1="503.4" y1="423.2" x2="492.7" y2="420.2" stroke-width="1.20"/>
<line x1="492.7" y1="420.2" x2="482.5" y2="417.3" stroke-width="1.20"/>
<line x1="482.5" y1="417.3" x2="472.8" y2="414.6" stroke-width="1.20"/>
<line x1="472.8" y1="414.6" x2="463.5" y2="412.0" stroke-width="1.20"/>
<line x1="717.7" y1="472.9" x2="696.3" y2="467.2" stroke-width="1.20"/>
<line x1="696.3" y1="467.2" x2="676.3" y2="461.9" stroke-width="1.20"/>
<line x1="676.3" y1="461.9" x2="657.5" y2="456.9" stroke-width="1.20"/>
<line x1="657.5" y1="456.9" x2="639.7" y2="452.1" stroke-width="1.20"/>
<line x1="639.7" y1="452.1" x2="623.0" y2="447.7" stroke-width="1.20"/>
<line x1="623.0" y1="447.7" x2="607.1" y2="443.5" stroke-width="1.20"/>
<line x1="607.1" y1="443.5" x2="592.1" y2="439.5" stroke-width="1.20"/>
<line x1="592.1" y1="439.5" x2="577.8" y2="435.7" stroke-width="1.20"/>
<line x1="577.8" y1="435.7" x2="564.3" y2="432.1" stroke-width="1.20"/>
<line x1="564.3" y1="432.1" x2="551.4" y2="428.7" stroke-width="1.20"/>
<line x1="551.4" y1="428.7" x2="539.2" y2="425.4" stroke-width="1.20"/>
<line x1="539.2" y1="425.4" x2="527.5" y2="422.3" stroke-width="1.20"/>
<line x1="527.5" y1="422.3" x2="516.3" y2="419.4" stroke-width="1.20"/>
<line x1="516.3" y1="419.4" x2="505.7" y2="416.5" stroke-width="1.20"/>
<line x1="505.7" y1="416.5" x2="495.5" y2="413.8" stroke-width="1.20"/>
<line x1="495.5" y1="413.8" x2="485.8" y2="411.3" stroke-width="1.20"/>
<line x1="715.1" y1="454.2" x2="696.0" y2="449.7" stroke-width="1.20"/>
<line x1="696.0" y1="449.7" x2="677.9" y2="445.3" stroke-width="1.20"/>
<line x1="677.9" y1="445.3" x2="660.8" y2="441.2" stroke-width="1.20"/>
<line x1="660.8" y1="441.2" x2="644.6" y2="437.4" stroke-width="1.20"/>
<line x1="644.6" y1="437.4" x2="629.3" y2="433.7" stroke-width="1.20"/>
<line x1="629.3" y1="433.7" x2="614.6" y2="430.2" stroke-width="1.20"/>
<line x1="614.6" y1="430.2" x2="600.7" y2="426.9" stroke-width="1.20"/>
<line x1="600.7" y1="426.9" x2="587.5" y2="423.7" stroke-width="1.20"/>
<line x1="587.5" y1="423.7" x2="574.8" y2="420.7" stroke-width="1.20"/>
<line x1="574.8" y1="420.7" x2="562.7" y2="417.8" stroke-width="1.20"/>
<line x1="562.7" y1="417.8" x2="551.2" y2="415.0" stroke-width="1.20"/>
<line x1="551.2" y1="415.0" x2="540.1" y2="412.4" stroke-width="1.20"/>
<line x1="540.1" y1="412.4" x2="529.6" y2="409.9" stroke-width="1.20"/>
<line x1="704.8" y1="444.2" x2="687.1" y2="440.2" stroke-width="1.20"/>
<line x1="687.1" y1="440.2" x2="670.4" y2="436.3" stroke-width="1.20"/>
<line x1="670.4" y1="436.3" x2="654.4" y2="432.7" stroke-width="1.20"/>
<line x1="654.4" y1="432.7" x2="639.3" y2="429.3" stroke-width="1.20"/>
<line x1="639.3" y1="429.3" x2="624.9" y2="426.0" stroke-width="1.20"/>
<line x1="624.9" y1="426.0" x2="611.1" y2="422.9" stroke-width="1.20"/>
<line x1="611.1" y1="422.9" x2="598.0" y2="419.9" stroke-width="1.20"/>
<line x1="598.0" y1="419.9" x2="585.5" y2="417.0" stroke-width="1.20"/>
<line x1="585.5" y1="417.0" x2="573.5" y2="414.3" stroke-width="1.20"/>
<line x1="573.5" y1="414.3" x2="562.1" y2="411.7" stroke-width="1.20"/>
<line x1="562.1" y1="411.7" x2="551.1" y2="409.2" stroke-width="1.20"/>
<line x1="713.0" y1="439.1" x2="695.7" y2="435.3" stroke-width="1.20"/>
<line x1="695.7" y1="435.3" x2="679.3" y2="431.7" stroke-width="1.20"/>
<line x1="679.3" y1="431.7" x2="663.6" y2="428.3" stroke-width="1.20"/>
<line x1="663.6" y1="428.3" x2="648.7" y2="425.1" stroke-width="1.20"/>
<line x1="648.7" y1="425.1" x2="634.5" y2="422.0" stroke-width="1.20"/>
<line x1="634.5" y1="422.0" x2="620.9" y2="419.1" stroke-width="1.20"/>
<line x1="620.9" y1="419.1" x2="608.0" y2="416.2" stroke-width="1.20"/>
<line x1="608.0" y1="416.2" x2="595.6" y2="413.6" stroke-width="1.20"/>
<line x1="595.6" y1="413.6" x2="583.7" y2="411.0" stroke-width="1.20"/>
<line x1="583.7" y1="411.0" x2="572.4" y2="408.5" stroke-width="1.20"/>
<line x1="703.7" y1="430.8" x2="687.6" y2="427.4" stroke-width="1.20"/>
<line x1="687.6" y1="427.4" x2="672.2" y2="424.2" stroke-width="1.20"/>
<line x1="672.2" y1="424.2" x2="657.6" y2="421.2" stroke-width="1.20"/>
<line x1="657.6" y1="421.2" x2="643.6" y2="418.3" stroke-width="1.20"/>
<line x1="643.6" y1="418.3" x2="630.2" y2="415.5" stroke-width="1.20"/>
<line x1="630.2" y1="415.5" x2="617.4" y2="412.8" stroke-width="1.20"/>
<line x1="617.4" y1="412.8" x2="605.1" y2="410.3" stroke-width="1.20"/>
<line x1="605.1" y1="410.3" x2="593.4" y2="407.8" stroke-width="1.20"/>
<line x1="702.9" y1="419.5" x2="688.0" y2="416.7" stroke-width="1.20"/>
<line x1="688.0" y1="416.7" x2="673.8" y2="414.0" stroke-width="1.20"/>
<line x1="673.8" y1="414.0" x2="660.3" y2="411.4" stroke-width="1.20"/>
<line x1="660.3" y1="411.4" x2="647.2" y2="408.9" stroke-width="1.20"/>
<line x1="647.2" y1="408.9" x2="634.8" y2="406.5" stroke-width="1.20"/>
<line x1="709.8" y1="415.9" x2="695.3" y2="413.3" stroke-width="1.20"/>
<line x1="695.3" y1="413.3" x2="681.3" y2="410.7" stroke-width="1.20"/>
<line x1="681.3" y1="410.7" x2="667.9" y2="408.2" stroke-width="1.20"/>
<line x1="667.9" y1="408.2" x2="655.1" y2="405.9" stroke-width="1.20"/>
<line x1="702.1" y1="410.0" x2="688.4" y2="407.6" stroke-width="1.20"/>
<line x1="688.4" y1="407.6" x2="675.2" y2="405.2" stroke-width="1.20"/>
<line x1="708.6" y1="406.9" x2="695.1" y2="404.6" stroke-width="1.20"/>
<line x1="-5366.3" y1="3553.9" x2="571.2" y2="1542.2" stroke-width="2.00"/>
<line x1="571.2" y1="1542.2" x2="1979.4" y2="1065.1" stroke-width="2.00"/>
<line x1="1979.4" y1="1065.1" x2="3021.5" y2="712.0" stroke-width="2.00"/>
<line x1="-3371.4" y1="2350.1" x2="473.6" y2="1313.2" stroke-width="2.00"/>
<line x1="473.6" y1="1313.2" x2="1742.9" y2="970.9" stroke-width="2.00"/>
<line x1="1742.9" y1="970.9" x2="2812.2" y2="682.6" stroke-width="2.00"/>
<line x1="-2452.1" y1="1795.4" x2="406.2" y2="1155.2" stroke-width="2.00"/>
<line x1="406.2" y1="1155.2" x2="1557.8" y2="897.2" stroke-width="2.00"/>
<line x1="1557.8" y1="897.2" x2="2630.4" y2="657.0" stroke-width="2.00"/>
<line x1="-1579.7" y1="1268.9" x2="319.3" y2="951.2" stroke-width="2.00"/>
<line x1="319.3" y1="951.2" x2="1286.7" y2="789.3" stroke-width="2.00"/>
<line x1="1286.7" y1="789.3" x2="2330.0" y2="614.8" stroke-width="2.00"/>
<line x1="-1338.5" y1="1123.4" x2="289.6" y2="881.5" stroke-width="2.00"/>
<line x1="289.6" y1="881.5" x2="1184.4" y2="748.6" stroke-width="2.00"/>
<line x1="1184.4" y1="748.6" x2="2204.4" y2="597.1" stroke-width="2.00"/>
<line x1="-1159.9" y1="1015.6" x2="265.6" y2="825.2" stroke-width="2.00"/>
<line x1="265.6" y1="825.2" x2="1097.7" y2="714.1" stroke-width="2.00"/>
<line x1="1097.7" y1="714.1" x2="2091.9" y2="581.3" stroke-width="2.00"/>
<line x1="-1022.3" y1="932.6" x2="245.8" y2="778.7" stroke-width="2.00"/>
<line x1="245.8" y1="778.7" x2="1023.1" y2="684.4" stroke-width="2.00"/>
<line x1="1023.1" y1="684.4" x2="1990.6" y2="567.0" stroke-width="2.00"/>
<line x1="-824.2" y1="813.0" x2="215.0" y2="706.4" stroke-width="2.00"/>
<line x1="215.0" y1="706.4" x2="901.6" y2="636.0" stroke-width="2.00"/>
<line x1="901.6" y1="636.0" x2="1815.1" y2="542.3" stroke-width="1.59"/>
<line x1="-750.5" y1="768.6" x2="202.8" y2="677.8" stroke-width="2.00"/>
<line x1="202.8" y1="677.8" x2="851.5" y2="616.1" stroke-width="1.78"/>
<line x1="851.5" y1="616.1" x2="1738.7" y2="531.6" stroke-width="1.41"/>
<line x1="-688.4" y1="731.1" x2="192.1" y2="652.9" stroke-width="1.85"/>
<line x1="192.1" y1="652.9" x2="806.8" y2="598.3" stroke-width="1.57"/>
<line x1="806.8" y1="598.3" x2="1668.6" y2="521.7" stroke-width="1.26"/>
<line x1="-635.4" y1="699.1" x2="182.8" y2="631.0" stroke-width="1.63"/>
<line x1="182.8" y1="631.0" x2="766.8" y2="582.4" stroke-width="1.39"/>
<line x1="766.8" y1="582.4" x2="1604.1" y2="512.7" stroke-width="1.13"/>
<line x1="-549.6" y1="647.3" x2="167.2" y2="594.3" stroke-width="1.29"/>
<line x1="167.2" y1="594.3" x2="698.1" y2="555.0" stroke-width="1.12"/>
<line x1="698.1" y1="555.0" x2="1489.2" y2="496.5" stroke-width="1.10"/>
<line x1="-514.4" y1="626.1" x2="160.6" y2="578.8" stroke-width="1.16"/>
<line x1="160.6" y1="578.8" x2="668.4" y2="543.2" stroke-width="1.10"/>
<line x1="668.4" y1="543.2" x2="1437.9" y2="489.3" stroke-width="1.10"/>
<line x1="-483.2" y1="607.3" x2="154.6" y2="564.8" stroke-width="1.10"/>
<line x1="154.6" y1="564.8" x2="641.3" y2="532.4" stroke-width="1.10"/>
<line x1="641.3" y1="532.4" x2="1390.0" y2="482.6" stroke-width="1.10"/>
<line x1="-455.3" y1="590.4" x2="149.2" y2="552.1" stroke-width="1.10"/>
<line x1="149.2" y1="552.1" x2="616.4" y2="522.5" stroke-width="1.10"/>
<line x1="616.4" y1="522.5" x2="1345.4" y2="476.3" stroke-width="1.10"/>
<line x1="-407.6" y1="561.7" x2="139.7" y2="530.0" stroke-width="1.10"/>
<line x1="139.7" y1="530.0" x2="572.3" y2="504.9" stroke-width="1.10"/>
<line x1="572.3" y1="504.9" x2="1264.3" y2="464.9" stroke-width="1.10"/>
<line x1="-387.1" y1="549.3" x2="135.6" y2="520.3" stroke-width="1.10"/>
<line x1="135.6" y1="520.3" x2="552.6" y2="497.1" stroke-width="1.10"/>
<line x1="552.6" y1="497.1" x2="1227.5" y2="459.7" stroke-width="1.10"/>
<line x1="-368.3" y1="537.9" x2="131.8" y2="511.3" stroke-width="1.10"/>
<line x1="131.8" y1="511.3" x2="534.4" y2="489.9" stroke-width="1.10"/>
<line x1="534.4" y1="489.9" x2="1192.7" y2="454.8" stroke-width="1.10"/>
<line x1="-351.2" y1="527.6" x2="128.3" y2="503.0" stroke-width="1.10"/>
<line x1="128.3" y1="503.0" x2="517.4" y2="483.1" stroke-width="1.10"/>
<line x1="517.4" y1="483.1" x2="1160.0" y2="450.2" stroke-width="1.10"/>
<line x1="-320.9" y1="509.3" x2="122.0" y2="488.2" stroke-width="1.10"/>
<line x1="122.0" y1="488.2" x2="486.7" y2="470.9" stroke-width="1.10"/>
<line x1="486.7" y1="470.9" x2="1099.8" y2="441.7" stroke-width="1.10"/>
<line x1="-307.4" y1="501.2" x2="119.1" y2="481.6" stroke-width="1.10"/>
<line x1="119.1" y1="481.6" x2="472.8" y2="465.3" stroke-width="1.10"/>
<line x1="472.8" y1="465.3" x2="1072.1" y2="437.8" stroke-width="1.10"/>
<line x1="-294.9" y1="493.6" x2="116.5" y2="475.4" stroke-width="1.10"/>
<line x1="116.5" y1="475.4" x2="459.7" y2="460.1" stroke-width="1.10"/>
<line x1="459.7" y1="460.1" x2="1045.7" y2="434.1" stroke-width="1.10"/>
<line x1="-283.3" y1="486.6" x2="114.0" y2="469.6" stroke-width="1.10"/>
<line x1="114.0" y1="469.6" x2="447.4" y2="455.2" stroke-width="1.10"/>
<line x1="447.4" y1="455.2" x2="1020.7" y2="430.6" stroke-width="1.10"/>
<line x1="-262.3" y1="474.0" x2="109.5" y2="459.0" stroke-width="1.10"/>
<line x1="109.5" y1="459.0" x2="424.8" y2="446.2" stroke-width="1.10"/>
<line x1="424.8" y1="446.2" x2="974.2" y2="424.1" stroke-width="1.10"/>
<line x1="-252.9" y1="468.3" x2="107.4" y2="454.1" stroke-width="1.10"/>
<line x1="107.4" y1="454.1" x2="414.5" y2="442.1" stroke-width="1.10"/>
<line x1="414.5" y1="442.1" x2="952.6" y2="421.0" stroke-width="1.10"/>
<line x1="-243.9" y1="462.9" x2="105.5" y2="449.6" stroke-width="1.10"/>
<line x1="105.5" y1="449.6" x2="404.6" y2="438.2" stroke-width="1.10"/>
<line x1="404.6" y1="438.2" x2="931.9" y2="418.1" stroke-width="1.10"/>
<line x1="-235.6" y1="457.8" x2="103.6" y2="445.3" stroke-width="1.10"/>
<line x1="103.6" y1="445.3" x2="395.3" y2="434.5" stroke-width="1.10"/>
<line x1="395.3" y1="434.5" x2="912.2" y2="415.3" stroke-width="1.10"/>
<line x1="-220.2" y1="448.6" x2="100.3" y2="437.3" stroke-width="1.10"/>
<line x1="100.3" y1="437.3" x2="378.0" y2="427.6" stroke-width="1.10"/>
<line x1="378.0" y1="427.6" x2="875.2" y2="410.1" stroke-width="1.10"/>
<line x1="-213.2" y1="444.3" x2="98.7" y2="433.7" stroke-width="1.10"/>
<line x1="98.7" y1="433.7" x2="369.9" y2="424.4" stroke-width="1.10"/>
<line x1="369.9" y1="424.4" x2="857.9" y2="407.7" stroke-width="1.10"/>
<line x1="-206.5" y1="440.3" x2="97.2" y2="430.2" stroke-width="1.10"/>
<line x1="97.2" y1="430.2" x2="362.3" y2="421.3" stroke-width="1.10"/>
<line x1="362.3" y1="421.3" x2="841.2" y2="405.4" stroke-width="1.10"/>
<line x1="-200.2" y1="436.5" x2="95.8" y2="426.8" stroke-width="1.10"/>
<line x1="95.8" y1="426.8" x2="354.9" y2="418.4" stroke-width="1.10"/>
<line x1="354.9" y1="418.4" x2="825.3" y2="403.1" stroke-width="1.10"/></g>
<g class="mj"><line x1="-21.0" y1="591.5" x2="-18.0" y2="576.3" stroke-width="2.40"/>
<line x1="-18.0" y1="576.3" x2="-15.3" y2="562.5" stroke-width="2.40"/>
<line x1="-15.3" y1="562.5" x2="-12.8" y2="550.0" stroke-width="2.40"/>
<line x1="-12.8" y1="550.0" x2="-10.5" y2="538.7" stroke-width="2.40"/>
<line x1="-10.5" y1="538.7" x2="-8.4" y2="528.2" stroke-width="2.40"/>
<line x1="-8.4" y1="528.2" x2="-6.5" y2="518.7" stroke-width="2.40"/>
<line x1="-6.5" y1="518.7" x2="-4.8" y2="509.8" stroke-width="2.40"/>
<line x1="-4.8" y1="509.8" x2="-3.1" y2="501.7" stroke-width="2.40"/>
<line x1="-3.1" y1="501.7" x2="-1.6" y2="494.1" stroke-width="2.40"/>
<line x1="-1.6" y1="494.1" x2="-0.2" y2="487.1" stroke-width="2.40"/>
<line x1="-0.2" y1="487.1" x2="1.1" y2="480.5" stroke-width="2.40"/>
<line x1="1.1" y1="480.5" x2="2.3" y2="474.4" stroke-width="2.40"/>
<line x1="2.3" y1="474.4" x2="3.4" y2="468.6" stroke-width="2.40"/>
<line x1="3.4" y1="468.6" x2="4.5" y2="463.2" stroke-width="2.40"/>
<line x1="4.5" y1="463.2" x2="5.5" y2="458.1" stroke-width="2.39"/>
<line x1="5.5" y1="458.1" x2="6.5" y2="453.4" stroke-width="2.32"/>
<line x1="6.5" y1="453.4" x2="7.4" y2="448.8" stroke-width="2.25"/>
<line x1="7.4" y1="448.8" x2="8.2" y2="444.6" stroke-width="2.19"/>
<line x1="8.2" y1="444.6" x2="9.0" y2="440.5" stroke-width="2.13"/>
<line x1="9.0" y1="440.5" x2="9.8" y2="436.7" stroke-width="2.08"/>
<line x1="9.8" y1="436.7" x2="10.5" y2="433.1" stroke-width="2.02"/>
<line x1="10.5" y1="433.1" x2="11.2" y2="429.6" stroke-width="2.00"/>
<line x1="11.2" y1="429.6" x2="11.9" y2="426.3" stroke-width="2.00"/>
<line x1="721.4" y1="654.5" x2="679.7" y2="632.4" stroke-width="2.36"/>
<line x1="679.7" y1="632.4" x2="642.8" y2="612.9" stroke-width="2.22"/>
<line x1="642.8" y1="612.9" x2="609.9" y2="595.4" stroke-width="2.10"/>
<line x1="609.9" y1="595.4" x2="580.5" y2="579.8" stroke-width="2.00"/>
<line x1="580.5" y1="579.8" x2="553.9" y2="565.7" stroke-width="2.00"/>
<line x1="553.9" y1="565.7" x2="529.8" y2="552.9" stroke-width="2.00"/>
<line x1="529.8" y1="552.9" x2="507.8" y2="541.3" stroke-width="2.00"/>
<line x1="507.8" y1="541.3" x2="487.7" y2="530.6" stroke-width="2.00"/>
<line x1="487.7" y1="530.6" x2="469.3" y2="520.9" stroke-width="2.00"/>
<line x1="469.3" y1="520.9" x2="452.3" y2="511.9" stroke-width="2.00"/>
<line x1="452.3" y1="511.9" x2="436.7" y2="503.6" stroke-width="2.00"/>
<line x1="436.7" y1="503.6" x2="422.1" y2="495.8" stroke-width="2.00"/>
<line x1="422.1" y1="495.8" x2="408.6" y2="488.7" stroke-width="2.00"/>
<line x1="408.6" y1="488.7" x2="396.0" y2="482.0" stroke-width="2.00"/>
<line x1="396.0" y1="482.0" x2="384.2" y2="475.8" stroke-width="2.00"/>
<line x1="384.2" y1="475.8" x2="373.2" y2="469.9" stroke-width="2.00"/>
<line x1="373.2" y1="469.9" x2="362.9" y2="464.4" stroke-width="2.00"/>
<line x1="362.9" y1="464.4" x2="353.2" y2="459.3" stroke-width="2.00"/>
<line x1="353.2" y1="459.3" x2="344.0" y2="454.4" stroke-width="2.00"/>
<line x1="344.0" y1="454.4" x2="335.4" y2="449.9" stroke-width="2.00"/>
<line x1="335.4" y1="449.9" x2="327.2" y2="445.5" stroke-width="2.00"/>
<line x1="327.2" y1="445.5" x2="319.5" y2="441.4" stroke-width="2.00"/>
<line x1="319.5" y1="441.4" x2="312.2" y2="437.6" stroke-width="2.00"/>
<line x1="312.2" y1="437.6" x2="305.2" y2="433.9" stroke-width="2.00"/>
<line x1="305.2" y1="433.9" x2="298.6" y2="430.4" stroke-width="2.00"/>
<line x1="298.6" y1="430.4" x2="292.3" y2="427.0" stroke-width="2.00"/>
<line x1="292.3" y1="427.0" x2="286.3" y2="423.9" stroke-width="2.00"/>
<line x1="286.3" y1="423.9" x2="280.6" y2="420.8" stroke-width="2.00"/>
<line x1="280.6" y1="420.8" x2="275.2" y2="417.9" stroke-width="2.00"/>
<line x1="725.1" y1="526.8" x2="697.4" y2="517.4" stroke-width="2.00"/>
<line x1="697.4" y1="517.4" x2="671.8" y2="508.6" stroke-width="2.00"/>
<line x1="671.8" y1="508.6" x2="648.1" y2="500.5" stroke-width="2.00"/>
<line x1="648.1" y1="500.5" x2="626.1" y2="493.0" stroke-width="2.00"/>
<line x1="626.1" y1="493.0" x2="605.7" y2="486.1" stroke-width="2.00"/>
<line x1="605.7" y1="486.1" x2="586.6" y2="479.6" stroke-width="2.00"/>
<line x1="586.6" y1="479.6" x2="568.8" y2="473.5" stroke-width="2.00"/>
<line x1="568.8" y1="473.5" x2="552.1" y2="467.8" stroke-width="2.00"/>
<line x1="552.1" y1="467.8" x2="536.4" y2="462.4" stroke-width="2.00"/>
<line x1="536.4" y1="462.4" x2="521.7" y2="457.4" stroke-width="2.00"/>
<line x1="521.7" y1="457.4" x2="507.8" y2="452.6" stroke-width="2.00"/>
<line x1="507.8" y1="452.6" x2="494.7" y2="448.2" stroke-width="2.00"/>
<line x1="494.7" y1="448.2" x2="482.3" y2="443.9" stroke-width="2.00"/>
<line x1="482.3" y1="443.9" x2="470.5" y2="439.9" stroke-width="2.00"/>
<line x1="470.5" y1="439.9" x2="459.4" y2="436.1" stroke-width="2.00"/>
<line x1="459.4" y1="436.1" x2="448.8" y2="432.5" stroke-width="2.00"/>
<line x1="448.8" y1="432.5" x2="438.7" y2="429.1" stroke-width="2.00"/>
<line x1="438.7" y1="429.1" x2="429.1" y2="425.8" stroke-width="2.00"/>
<line x1="429.1" y1="425.8" x2="420.0" y2="422.7" stroke-width="2.00"/>
<line x1="420.0" y1="422.7" x2="411.3" y2="419.7" stroke-width="2.00"/>
<line x1="411.3" y1="419.7" x2="402.9" y2="416.9" stroke-width="2.00"/>
<line x1="402.9" y1="416.9" x2="395.0" y2="414.1" stroke-width="2.00"/>
<line x1="706.1" y1="460.5" x2="686.5" y2="455.5" stroke-width="2.00"/>
<line x1="686.5" y1="455.5" x2="668.1" y2="450.9" stroke-width="2.00"/>
<line x1="668.1" y1="450.9" x2="650.7" y2="446.5" stroke-width="2.00"/>
<line x1="650.7" y1="446.5" x2="634.2" y2="442.4" stroke-width="2.00"/>
<line x1="634.2" y1="442.4" x2="618.5" y2="438.4" stroke-width="2.00"/>
<line x1="618.5" y1="438.4" x2="603.7" y2="434.7" stroke-width="2.00"/>
<line x1="603.7" y1="434.7" x2="589.6" y2="431.2" stroke-width="2.00"/>
<line x1="589.6" y1="431.2" x2="576.2" y2="427.8" stroke-width="2.00"/>
<line x1="576.2" y1="427.8" x2="563.5" y2="424.6" stroke-width="2.00"/>
<line x1="563.5" y1="424.6" x2="551.3" y2="421.5" stroke-width="2.00"/>
<line x1="551.3" y1="421.5" x2="539.7" y2="418.6" stroke-width="2.00"/>
<line x1="539.7" y1="418.6" x2="528.6" y2="415.8" stroke-width="2.00"/>
<line x1="528.6" y1="415.8" x2="518.0" y2="413.1" stroke-width="2.00"/>
<line x1="518.0" y1="413.1" x2="507.8" y2="410.6" stroke-width="2.00"/>
<line x1="711.3" y1="426.5" x2="695.5" y2="423.4" stroke-width="2.00"/>
<line x1="695.5" y1="423.4" x2="680.4" y2="420.4" stroke-width="2.00"/>
<line x1="680.4" y1="420.4" x2="665.9" y2="417.5" stroke-width="2.00"/>
<line x1="665.9" y1="417.5" x2="652.2" y2="414.7" stroke-width="2.00"/>
<line x1="652.2" y1="414.7" x2="639.0" y2="412.1" stroke-width="2.00"/>
<line x1="639.0" y1="412.1" x2="626.3" y2="409.6" stroke-width="2.00"/>
<line x1="626.3" y1="409.6" x2="614.2" y2="407.2" stroke-width="2.00"/>
<line x1="-1923.3" y1="1476.3" x2="356.9" y2="1039.5" stroke-width="2.50"/>
<line x1="356.9" y1="1039.5" x2="1409.0" y2="838.0" stroke-width="2.50"/>
<line x1="1409.0" y1="838.0" x2="2470.9" y2="634.6" stroke-width="2.50"/>
<line x1="-589.6" y1="671.5" x2="174.5" y2="611.6" stroke-width="2.20"/>
<line x1="174.5" y1="611.6" x2="730.8" y2="568.0" stroke-width="2.20"/>
<line x1="730.8" y1="568.0" x2="1544.5" y2="504.3" stroke-width="2.20"/>
<line x1="-430.2" y1="575.3" x2="144.2" y2="540.5" stroke-width="2.20"/>
<line x1="144.2" y1="540.5" x2="593.4" y2="513.4" stroke-width="2.20"/>
<line x1="593.4" y1="513.4" x2="1303.5" y2="470.4" stroke-width="2.20"/>
<line x1="-335.4" y1="518.1" x2="125.0" y2="495.4" stroke-width="2.20"/>
<line x1="125.0" y1="495.4" x2="501.6" y2="476.8" stroke-width="2.20"/>
<line x1="501.6" y1="476.8" x2="1129.1" y2="445.8" stroke-width="2.20"/>
<line x1="-272.5" y1="480.1" x2="111.7" y2="464.1" stroke-width="2.20"/>
<line x1="111.7" y1="464.1" x2="435.8" y2="450.6" stroke-width="2.20"/>
<line x1="435.8" y1="450.6" x2="996.9" y2="427.3" stroke-width="2.20"/>
<line x1="-227.7" y1="453.1" x2="101.9" y2="441.2" stroke-width="2.20"/>
<line x1="101.9" y1="441.2" x2="386.4" y2="430.9" stroke-width="2.20"/>
<line x1="386.4" y1="430.9" x2="893.3" y2="412.7" stroke-width="2.20"/></g>
<g class="ax"><line x1="976.5" y1="1404.9" x2="147.7" y2="422.0"/></g>
<g class="ax0"><line x1="-913.0" y1="866.6" x2="1898.7" y2="554.1"/></g>
<g class="ed"><line x1="-194.2" y1="432.8" x2="809.9" y2="401.0"/></g>

</g>
<!-- panel separators -->
<rect x="677" y="72.6" width="401" height="1.4" fill="#222"/>
<rect x="853" y="74" width="28" height="3" rx="1.5" fill="#383838"/>
<rect x="677" y="586.5" width="379" height="1.3" fill="#222"/>
<rect x="1063" y="341" width="9.5" height="241" rx="4.7" fill="#494949"/>
<g clip-path="url(#vpc)">
<defs><linearGradient id="gface" x1="0" y1="0" x2="1" y2="0.3"><stop offset="0" stop-color="#5a5a5a"/><stop offset="0.5" stop-color="#616161"/><stop offset="1" stop-color="#656565"/></linearGradient><linearGradient id="yface" x1="0" y1="1" x2="1" y2="0"><stop offset="0" stop-color="#9b9a46"/><stop offset="1" stop-color="#a5a34a"/></linearGradient></defs>
<path d="M396.4 383.5 C401.1 382.8 405.5 382.1 408.9 383.0 C412.3 383.9 414.0 385.8 416.8 388.6 C419.6 391.4 422.9 395.8 425.9 400.0 C428.9 404.2 432.6 409.1 435.0 413.6 C437.4 418.1 439.1 422.3 440.4 427.0 C441.7 431.7 442.6 437.2 442.8 442.0 C443.0 446.8 442.1 451.2 441.5 456.0 C440.9 460.8 440.6 463.5 439.2 470.8 C437.8 478.1 436.2 491.7 433.2 499.6 C430.2 507.5 425.0 512.4 421.0 518.0 C417.0 523.6 413.4 528.2 409.2 533.1 C405.0 538.0 400.6 544.4 395.6 547.2 C390.6 550.0 384.0 549.9 379.2 549.7 C374.4 549.5 370.8 549.1 366.6 545.9 C362.4 542.7 357.4 536.6 354.0 530.7 C350.6 524.8 348.2 518.1 346.4 510.5 C344.6 502.9 343.5 493.7 343.2 485.3 C342.9 476.9 343.7 467.9 344.5 460.0 C345.3 452.1 346.8 443.6 348.0 438.0 C349.2 432.4 349.4 431.9 352.0 426.1 C354.6 420.3 358.6 409.8 363.4 403.4 C368.1 397.0 375.0 390.8 380.5 387.5 C386.0 384.2 391.7 384.2 396.4 383.5Z" fill="#434343" stroke="#727272" stroke-width="1.2"/>
<path d="M396.4 383.5 C400.6 382.8 405.5 382.1 408.9 383.0 C412.3 383.9 414.0 385.8 416.8 388.6 C419.6 391.4 422.9 395.8 425.9 400.0 C428.9 404.2 432.6 409.1 435.0 413.6 C437.4 418.1 439.1 422.3 440.4 427.0 C441.7 431.7 442.6 437.2 442.8 442.0 C443.0 446.8 442.1 451.2 441.5 456.0 C440.9 460.8 440.6 463.5 439.2 470.8 C437.8 478.1 436.2 491.7 433.2 499.6 C430.2 507.5 425.0 512.4 421.0 518.0 C417.0 523.6 413.4 528.2 409.2 533.1 C405.0 538.0 400.6 544.4 395.6 547.2 C390.6 550.0 383.8 549.9 379.2 549.7 C374.6 549.5 371.6 549.0 368.1 545.8 C364.7 542.5 361.5 536.2 358.7 530.3 C356.0 524.3 353.6 517.6 351.9 510.0 C350.2 502.4 349.0 493.2 348.7 484.8 C348.4 476.4 349.2 467.4 350.0 459.5 C350.8 451.6 352.2 443.1 353.5 437.5 C354.8 431.9 354.9 431.4 357.5 425.6 C360.1 419.8 364.6 409.3 368.9 402.9 C373.2 396.5 378.9 390.5 383.5 387.2 C388.1 384.0 392.2 384.2 396.4 383.5Z" fill="url(#gface)"/>
<path d="M565.1 366.4 C569.4 365.6 571.9 365.3 576.7 365.8 C581.6 366.3 589.3 367.5 594.2 369.2 C599.0 371.0 602.3 373.1 605.8 376.3 C609.2 379.4 612.2 383.3 614.9 388.0 C617.5 392.6 620.2 399.2 621.7 404.3 C623.2 409.4 623.2 413.8 623.7 418.8 C624.3 423.8 624.8 429.1 624.8 434.2 C624.8 439.3 625.1 443.8 623.9 449.5 C622.8 455.2 620.5 462.3 618.0 468.4 C615.5 474.4 612.4 480.5 608.9 485.8 C605.5 491.0 601.9 495.9 597.5 499.8 C593.1 503.7 587.3 507.2 582.5 509.2 C577.7 511.3 573.4 512.0 568.6 512.2 C563.8 512.4 558.3 511.7 553.5 510.4 C548.6 509.2 543.2 506.7 539.6 504.6 C535.9 502.5 534.3 501.0 531.6 497.7 C528.8 494.3 525.3 489.0 522.9 484.3 C520.5 479.6 518.5 474.5 517.2 469.6 C516.0 464.8 515.4 459.9 515.2 455.1 C514.9 450.2 515.3 445.3 515.7 440.5 C516.1 435.7 516.5 430.9 517.5 426.1 C518.5 421.2 520.0 416.4 521.8 411.5 C523.6 406.6 525.7 401.8 528.2 396.9 C530.7 392.0 532.9 386.5 536.8 382.1 C540.6 377.7 546.5 373.1 551.2 370.5 C555.9 367.9 560.9 367.2 565.1 366.4Z" fill="url(#yface)" stroke="#0af6fb" stroke-width="4.6"/>
<path d="M556.0 373.0 C555.0 374.2 553.0 376.3 550.0 380.0 C547.0 383.7 541.7 388.9 537.9 395.2 C534.1 401.5 529.8 410.4 527.3 418.0 C524.8 425.6 523.7 433.1 522.7 440.6 C521.7 448.2 521.0 457.0 521.2 463.3 C521.5 469.6 522.7 473.9 524.2 478.5 C525.7 483.1 527.7 486.9 530.3 490.6 C532.9 494.4 538.4 499.3 540.0 501.0" fill="none" stroke="#55531f" stroke-width="2"/>
<path d="M551.8 380.0 C549.8 382.5 543.5 388.9 539.7 395.2 C535.9 401.5 531.6 410.4 529.1 418.0 C526.6 425.6 525.5 433.1 524.5 440.6 C523.5 448.2 522.8 457.0 523.0 463.3 C523.2 469.6 524.5 473.9 526.0 478.5 C527.5 483.1 531.1 488.6 532.1 490.6" fill="none" stroke="#858240" stroke-width="1.2"/>
<path d="M553 427 L572 437.5" stroke="#55532a" stroke-width="2.2" stroke-linecap="round"/><path d="M562 433 L571 437.8" stroke="#d8d060" stroke-width="1"/>
<!-- white wire on gray wheel -->
<g fill="none" stroke="#dcdcdc" stroke-width="1.2" stroke-linecap="round">
  <path d="M366 401.2 L355.5 407.5 L340 445 L338.8 509.9"/>
  <path d="M358 409 L342 446" stroke-width="0.6" stroke="#8a8a8a"/>
  <path d="M402 383.5 L409 382 L414.5 386.4 L443.5 429 L434.8 497.9 L385.5 539"/>
  <path d="M385.5 539 L372.3 482.1 M385.5 539 L368.5 502.9 M385.5 539 L371 530.7 M385.5 539 L399.8 443.2 M385.5 539 L443.5 429 M385.5 539 L394.4 535.8"/>
  <path d="M443.5 429 L406 419.9 M443.5 429 L404.3 434.7 M443.5 429 L412 455"/>
  <path d="M434.8 497.9 L396.5 477 M434.8 497.9 L410 440"/>
  <path d="M438.6 472 L446.2 468.8"/>
</g>
<g fill="#e6e6e6">
<circle cx="409" cy="382.5" r="2"/><circle cx="443.5" cy="429" r="1.8"/><circle cx="434.8" cy="497.9" r="1.8"/>
<circle cx="385.5" cy="539" r="1.9"/><circle cx="355.5" cy="407.5" r="1.6"/><circle cx="340" cy="445" r="1.6"/><circle cx="338.8" cy="509.9" r="1.6"/><circle cx="446.2" cy="468.8" r="1.4"/>
</g>
<!-- handlebar -->
<path d="M361.3 279.8 L438.4 303 L450.6 281.8" fill="none" stroke="#7e7e7e" stroke-width="1.2"/>
<circle cx="361.3" cy="279.8" r="2.2" fill="#f25a14"/>
<circle cx="450.6" cy="281.8" r="2.2" fill="#f25a14"/>
<!-- orange frame -->
<g fill="none" stroke="#f5550f" stroke-width="1.5" stroke-linejoin="round" stroke-linecap="round">
  <path d="M438.2 303 L409.8 381.4" stroke-width="3"/>
  <path d="M409.8 381.4 L408.6 464.3" stroke-width="1.8"/>
  <path d="M434.8 378 L424 432 L410 462"/>
  <path d="M435.9 317.7 L408.6 464.3"/>
  <path d="M438.2 303 L434.8 378 L408.6 464.3"/>
  <path d="M429.1 334.8 L412 420 L409 455"/>
  <path d="M414.3 376.4 L434.8 378"/>
  <path d="M408.6 464.3 L399.5 457.5"/>
  <path d="M429.1 334.8 L536.7 320"/>
  <path d="M429.1 334.8 L533.1 363.1"/>
  <path d="M430 338 L470.7 405.1 L517.5 461.5"/>
  <path d="M432 341 L485.1 445.9 L517.5 461.5"/>
  <path d="M536.7 320 L524 400 L517.5 461.5"/>
  <path d="M536.7 320 L533.1 363.1"/>
  <path d="M536.7 320 L557.8 370.6"/>
  <path d="M569.8 394.6 L587.8 437.8"/>
  <path d="M536.7 320 L543.9 371.5"/>
  <path d="M574.6 418.6 L587.8 437.8"/>
  <path d="M517.5 461.5 L587.8 437.8"/>
  <path d="M517.5 461.5 L495 452 L470.7 405.1" stroke-width="1.2"/>
</g>
<!-- cyan lines in yellow wheel -->
<g fill="none" stroke="#35dcd2" stroke-width="1.5" stroke-linecap="round">
  <path d="M557.8 370.6 L569.8 394.6"/>
  <path d="M565 405.4 L574.6 418.6"/>
  <path d="M575.8 436.6 L580.6 437.2" stroke-width="2"/>
  <path d="M523 463.6 L587.8 502 M587.8 502 L583 479.2 M587.8 502 L595 481.6 M587.8 502 L574.6 502.6"/>
  <path d="M519 458 L522 454 M520 467 L526 472"/>
</g>
<path d="M523 464.8 L563.8 457.6 L560.2 463.6 Z" fill="none" stroke="#b4b4b0" stroke-width="1.1"/>

</g>
<!-- Perspective chevron -->
<path d="M103.5 18.3 L107.5 22.3 L111.5 18.3" fill="none" stroke="#cfcfcf" stroke-width="1.5"/>
<!-- toolbar icons -->
<g fill="#9a9a9a" stroke="none">
  <!-- arrow cursor -->
  <path d="M259.4 10.3 L259.6 25 L263.2 21.8 L265.9 28.2 L268.3 27.1 L265.8 21 L270.8 20.6 Z"/>
  <path d="M274 31.5 L279.5 31.5 L279.5 26 Z"/>
  <path d="M314.5 31.5 L320 31.5 L320 26 Z"/>
  <path d="M352 31.5 L357.5 31.5 L357.5 26 Z"/>
  <path d="M438.2 31.5 L443.7 31.5 L443.7 26 Z"/>
  <!-- eye -->
  <path d="M331.6 19.6 C335.5 12.4 347 12.4 351 19.6 C347 26.8 335.5 26.8 331.6 19.6 Z"/>
  <!-- lock body -->
  <rect x="368" y="24.2" width="7.8" height="6" rx="0.6"/>
</g>
<circle cx="341.5" cy="19.3" r="4" fill="#1b1b1b"/>
<circle cx="342.4" cy="18.4" r="1" fill="#9a9a9a"/>
<g fill="none" stroke="#9a9a9a" stroke-width="1.6">
  <!-- magnifier -->
  <circle cx="300.7" cy="17.8" r="6.3"/>
  <path d="M305.2 22.3 L311 28.2" stroke-width="2"/>
  <!-- lock shackle -->
  <path d="M369.9 24.5 L369.9 21.6 Q371.9 17.6 373.9 21.6 L373.9 24.5" stroke-width="1.5"/>
  <!-- lock magnifier -->
  <path d="M371.3 16.4 A6.6 6.6 0 1 1 377.4 24.9"/>
  <path d="M382.4 23.4 L387.4 28.8" stroke-width="2"/>
  <!-- dashed rect -->
</g>
<rect x="403" y="7.6" width="2" height="24.2" fill="#6e6e6e"/>
<g fill="#9a9a9a"><rect x="417.9" y="10" width="4.3" height="1.9"/><rect x="417.9" y="27" width="4.3" height="1.9"/><rect x="423.3" y="10" width="3.7" height="1.9"/><rect x="423.3" y="27" width="3.7" height="1.9"/><rect x="428.1" y="10" width="3.7" height="1.9"/><rect x="428.1" y="27" width="3.7" height="1.9"/><rect x="432.9" y="10" width="4.2" height="1.9"/><rect x="432.9" y="27" width="4.2" height="1.9"/><rect x="417.9" y="10" width="1.9" height="4.3"/><rect x="435.2" y="10" width="1.9" height="4.3"/><rect x="417.9" y="15.4" width="1.9" height="3.7"/><rect x="435.2" y="15.4" width="1.9" height="3.7"/><rect x="417.9" y="20.2" width="1.9" height="3.7"/><rect x="435.2" y="20.2" width="1.9" height="3.7"/><rect x="417.9" y="25" width="1.9" height="3.9"/><rect x="435.2" y="25" width="1.9" height="3.9"/></g>
<!-- viewport dots -->
<g fill="#a6a6a6"><circle cx="639.8" cy="21.3" r="2.3"/><circle cx="646.1" cy="21.3" r="2.3"/><circle cx="652.5" cy="21.3" r="2.3"/></g>
<!-- panel close X -->
<path d="M1064 16 L1073.5 25.5 M1073.5 16 L1064 25.5" stroke="#e2e2e2" stroke-width="2.2"/>
<!-- lock open -->
<rect x="1015.8" y="53.8" width="7.6" height="6.6" fill="#a8a8a8"/>
<path d="M1021.8 53.8 L1021.8 51.5 Q1023.8 48.2 1025.6 51.5 L1025.6 53" fill="none" stroke="#a8a8a8" stroke-width="1.3"/>
<!-- panel dots -->
<g fill="#a8a8a8"><circle cx="1051.5" cy="57.7" r="2.2"/><circle cx="1058.4" cy="57.7" r="2.2"/><circle cx="1065.3" cy="57.7" r="2.2"/></g>
<!-- axis gizmo -->
<path d="M60.8 698.4 L60.8 729.5" stroke="#1f9e1f" stroke-width="2"/>
<path d="M30.8 729.8 L60.8 729.8" stroke="#a82222" stroke-width="2"/>
<path d="M57.5 684 L60.8 688 L64.1 684 M60.8 688 L60.8 692" fill="none" stroke="#22b022" stroke-width="1.6"/>
<path d="M18.5 727 L24.5 733.5 M24.5 727 L18.5 733.5" stroke="#cc2020" stroke-width="1.8"/>
<path d="M46.5 722 L53.5 722 L46.5 728.6 L53.5 728.6 M53 728.6 L60 729" fill="none" stroke="#2f7fd6" stroke-width="1.6"/>
<!-- Z ground label -->
<path d="M301.5 590.5 L316.5 590.8 L304 598.5 M311.5 597.5 L322 597.7" fill="none" stroke="#bdbdbd" stroke-width="1.4"/>

<g clip-path="url(#panc)"><path d="M918.1 99.0 L921.9 102.9 L925.7 99.0" fill="none" stroke="#a8a8a8" stroke-width="1.5"/>
<g transform="translate(0,0.00)"><path d="M1022.6 96 L1028.6 92.2 L1028.6 99.8 Z" fill="#a6a6a6"/><path d="M1027.5 96.1 L1031.6 96.1 A4.5 4.5 0 1 1 1030.1 105.2" fill="none" stroke="#a6a6a6" stroke-width="2"/></g>
<g transform="translate(0,31.30)"><path d="M1022.6 96 L1028.6 92.2 L1028.6 99.8 Z" fill="#a6a6a6"/><path d="M1027.5 96.1 L1031.6 96.1 A4.5 4.5 0 1 1 1030.1 105.2" fill="none" stroke="#a6a6a6" stroke-width="2"/></g>
<g transform="translate(0,281.70)"><path d="M1022.6 96 L1028.6 92.2 L1028.6 99.8 Z" fill="#a6a6a6"/><path d="M1027.5 96.1 L1031.6 96.1 A4.5 4.5 0 1 1 1030.1 105.2" fill="none" stroke="#a6a6a6" stroke-width="2"/></g>
<path d="M903.6 505.9 L907.4 509.8 L911.2 505.9" fill="none" stroke="#a8a8a8" stroke-width="1.5"/>
<g transform="translate(0,556.60)"><path d="M1022.6 96 L1028.6 92.2 L1028.6 99.8 Z" fill="#a6a6a6"/><path d="M1027.5 96.1 L1031.6 96.1 A4.5 4.5 0 1 1 1030.1 105.2" fill="none" stroke="#a6a6a6" stroke-width="2"/></g>
<path d="M897.2 749.5 L901.0 753.4 L904.8 749.5" fill="none" stroke="#a8a8a8" stroke-width="1.5"/>
<path d="M887.1 780.8 L890.9 784.7 L894.7 780.8" fill="none" stroke="#a8a8a8" stroke-width="1.5"/></g>
</svg>
<div style="position:absolute;left:0;top:0;width:1084px;height:792px;clip-path:inset(0 0 10.4px 0)">
<div class="t" style="left:13.10px;top:9.70px;font-size:15px;color:#dcdcdc;letter-spacing:0.270px;font-weight:normal;">Perspective</div>
<div class="t" style="left:700.40px;top:11.72px;font-size:13.5px;color:#9c9c9c;letter-spacing:-0.167px;font-weight:normal;">Devices</div>
<div class="t" style="left:783.00px;top:11.72px;font-size:13.5px;color:#9c9c9c;letter-spacing:-0.140px;font-weight:normal;">Assets</div>
<div class="t" style="left:856.70px;top:11.72px;font-size:13.5px;color:#e6e6e6;letter-spacing:0.078px;font-weight:normal;">Properties</div>
<div class="t" style="right:86.93px;top:46.86px;font-size:16px;color:#a4a4a4;letter-spacing:-0.200px;font-weight:normal;">(1) Selected</div>
<div class="t" style="right:241.50px;top:89.96px;font-size:16px;color:#a4a4a4;letter-spacing:0.512px;font-weight:normal;">Geometry:</div>
<div class="t" style="left:849.20px;top:90.66px;font-size:16px;color:#efefef;letter-spacing:0.214px;font-weight:normal;">Cylinder</div>
<div class="t" style="right:242.05px;top:121.26px;font-size:16px;color:#a4a4a4;letter-spacing:-0.007px;font-weight:normal;">Geometry Scale:</div>
<div class="t" style="right:241.88px;top:152.56px;font-size:16px;color:#a4a4a4;letter-spacing:0.200px;font-weight:normal;">X:</div>
<div class="inp" style="top:147.00px"></div>
<div class="t" style="left:852.60px;top:152.56px;font-size:16px;color:#efefef;letter-spacing:0.575px;font-weight:normal;">660.663 %</div>
<div class="t" style="right:241.97px;top:183.86px;font-size:16px;color:#a4a4a4;letter-spacing:0.100px;font-weight:normal;">Y:</div>
<div class="inp" style="top:178.30px"></div>
<div class="t" style="left:852.20px;top:183.86px;font-size:16px;color:#efefef;letter-spacing:0.600px;font-weight:normal;">19.683 %</div>
<div class="t" style="right:241.88px;top:215.16px;font-size:16px;color:#a4a4a4;letter-spacing:0.200px;font-weight:normal;">Z:</div>
<div class="inp" style="top:209.60px"></div>
<div class="t" style="left:852.60px;top:215.16px;font-size:16px;color:#efefef;letter-spacing:0.575px;font-weight:normal;">644.369 %</div>
<div class="t" style="right:241.88px;top:246.46px;font-size:16px;color:#a4a4a4;letter-spacing:0.194px;font-weight:normal;">Geometry Location:</div>
<div class="t" style="right:241.88px;top:277.76px;font-size:16px;color:#a4a4a4;letter-spacing:0.200px;font-weight:normal;">X:</div>
<div class="inp" style="top:272.20px"></div>
<div class="t" style="left:852.80px;top:277.76px;font-size:16px;color:#efefef;letter-spacing:0.600px;font-weight:normal;">0.00 mm</div>
<div class="t" style="right:241.97px;top:309.06px;font-size:16px;color:#a4a4a4;letter-spacing:0.100px;font-weight:normal;">Y:</div>
<div class="inp" style="top:303.50px"></div>
<div class="t" style="left:852.80px;top:309.06px;font-size:16px;color:#efefef;letter-spacing:0.600px;font-weight:normal;">0.00 mm</div>
<div class="t" style="right:241.88px;top:340.36px;font-size:16px;color:#a4a4a4;letter-spacing:0.200px;font-weight:normal;">Z:</div>
<div class="inp" style="top:334.80px"></div>
<div class="t" style="left:852.80px;top:340.36px;font-size:16px;color:#efefef;letter-spacing:0.600px;font-weight:normal;">0.00 mm</div>
<div class="t" style="right:241.76px;top:371.66px;font-size:16px;color:#a4a4a4;letter-spacing:0.345px;font-weight:normal;">Geometry Orientation:</div>
<div class="t" style="right:242.24px;top:402.96px;font-size:16px;color:#a4a4a4;letter-spacing:-0.233px;font-weight:normal;">Pitch (X):</div>
<div class="inp" style="top:397.40px"></div>
<div class="t" style="left:852.70px;top:402.96px;font-size:16px;color:#efefef;letter-spacing:0.729px;font-weight:normal;">-90.90 °</div>
<div class="t" style="right:242.77px;top:434.26px;font-size:16px;color:#a4a4a4;letter-spacing:-0.729px;font-weight:normal;">Yaw (Y):</div>
<div class="inp" style="top:428.70px"></div>
<div class="t" style="left:852.80px;top:434.26px;font-size:16px;color:#efefef;letter-spacing:0.860px;font-weight:normal;">0.00 °</div>
<div class="t" style="right:242.42px;top:465.56px;font-size:16px;color:#a4a4a4;letter-spacing:-0.400px;font-weight:normal;">Roll (Z):</div>
<div class="inp" style="top:460.00px"></div>
<div class="t" style="left:852.80px;top:465.56px;font-size:16px;color:#efefef;letter-spacing:0.860px;font-weight:normal;">0.00 °</div>
<div class="t" style="right:241.99px;top:496.86px;font-size:16px;color:#a4a4a4;letter-spacing:0.060px;font-weight:normal;">Bone Major Axis:</div>
<div class="t" style="left:849.60px;top:497.56px;font-size:16px;color:#efefef;letter-spacing:0.040px;font-weight:normal;">X-Axis</div>
<div class="t" style="right:241.91px;top:528.16px;font-size:16px;color:#a4a4a4;letter-spacing:0.158px;font-weight:normal;">Default Bone Length:</div>
<div class="inp" style="top:522.60px"></div>
<div class="t" style="left:852.20px;top:528.16px;font-size:16px;color:#efefef;letter-spacing:0.767px;font-weight:normal;">150.000 mm</div>
<div class="t" style="right:241.87px;top:559.46px;font-size:16px;color:#a4a4a4;letter-spacing:0.162px;font-weight:normal;">Bone Diameter:</div>
<div class="inp" style="top:553.90px"></div>
<div class="t" style="left:852.60px;top:559.46px;font-size:16px;color:#efefef;letter-spacing:0.725px;font-weight:normal;">20.000 mm</div>
<div class="t" style="left:701.50px;top:602.66px;font-size:16px;color:#f2f2f2;letter-spacing:-0.275px;font-weight:normal;-webkit-text-stroke:0.35px #f2f2f2">Bones</div>
<div class="t" style="right:242.17px;top:646.56px;font-size:16px;color:#a4a4a4;letter-spacing:-0.111px;font-weight:normal;">Bone Name:</div>
<div class="inp" style="top:641.00px"></div>
<div class="t" style="left:853.10px;top:646.56px;font-size:16px;color:#efefef;letter-spacing:0.375px;font-weight:normal;">Joint 001</div>
<div class="t" style="right:241.66px;top:677.86px;font-size:16px;color:#a4a4a4;letter-spacing:0.350px;font-weight:normal;">Parent:</div>
<div class="t" style="left:848.70px;top:677.86px;font-size:16px;color:#a0a0a0;letter-spacing:0.354px;font-weight:normal;">Marker Set 001</div>
<div class="t" style="right:241.86px;top:709.16px;font-size:16px;color:#a4a4a4;letter-spacing:0.213px;font-weight:normal;">Children:</div>
<div class="t" style="left:848.70px;top:709.16px;font-size:16px;color:#a0a0a0;letter-spacing:0.667px;font-weight:normal;">None</div>
<div class="t" style="right:242.04px;top:740.46px;font-size:16px;color:#a4a4a4;letter-spacing:0.033px;font-weight:normal;">Segment Type:</div>
<div class="t" style="left:848.70px;top:741.16px;font-size:16px;color:#efefef;letter-spacing:0.667px;font-weight:normal;">None</div>
<div class="t" style="right:241.81px;top:771.76px;font-size:16px;color:#a4a4a4;letter-spacing:0.207px;font-weight:normal;">Rotation Order:</div>
<div class="t" style="left:849.50px;top:772.46px;font-size:16px;color:#efefef;letter-spacing:-0.600px;font-weight:normal;">ZYX</div>
</div>
<div class="t" style="right:446.32px;top:699.46px;font-size:16px;color:#e2e2e2;letter-spacing:0.292px;font-weight:normal;">Marker Set 001</div>
<div class="t" style="right:450.48px;top:724.26px;font-size:16px;color:#e2e2e2;letter-spacing:0.400px;font-weight:normal;">33 Markers</div>
<div class="t" style="right:449.26px;top:748.86px;font-size:16px;color:#e2e2e2;letter-spacing:0.033px;font-weight:normal;">0 Selected</div>
</body></html>
